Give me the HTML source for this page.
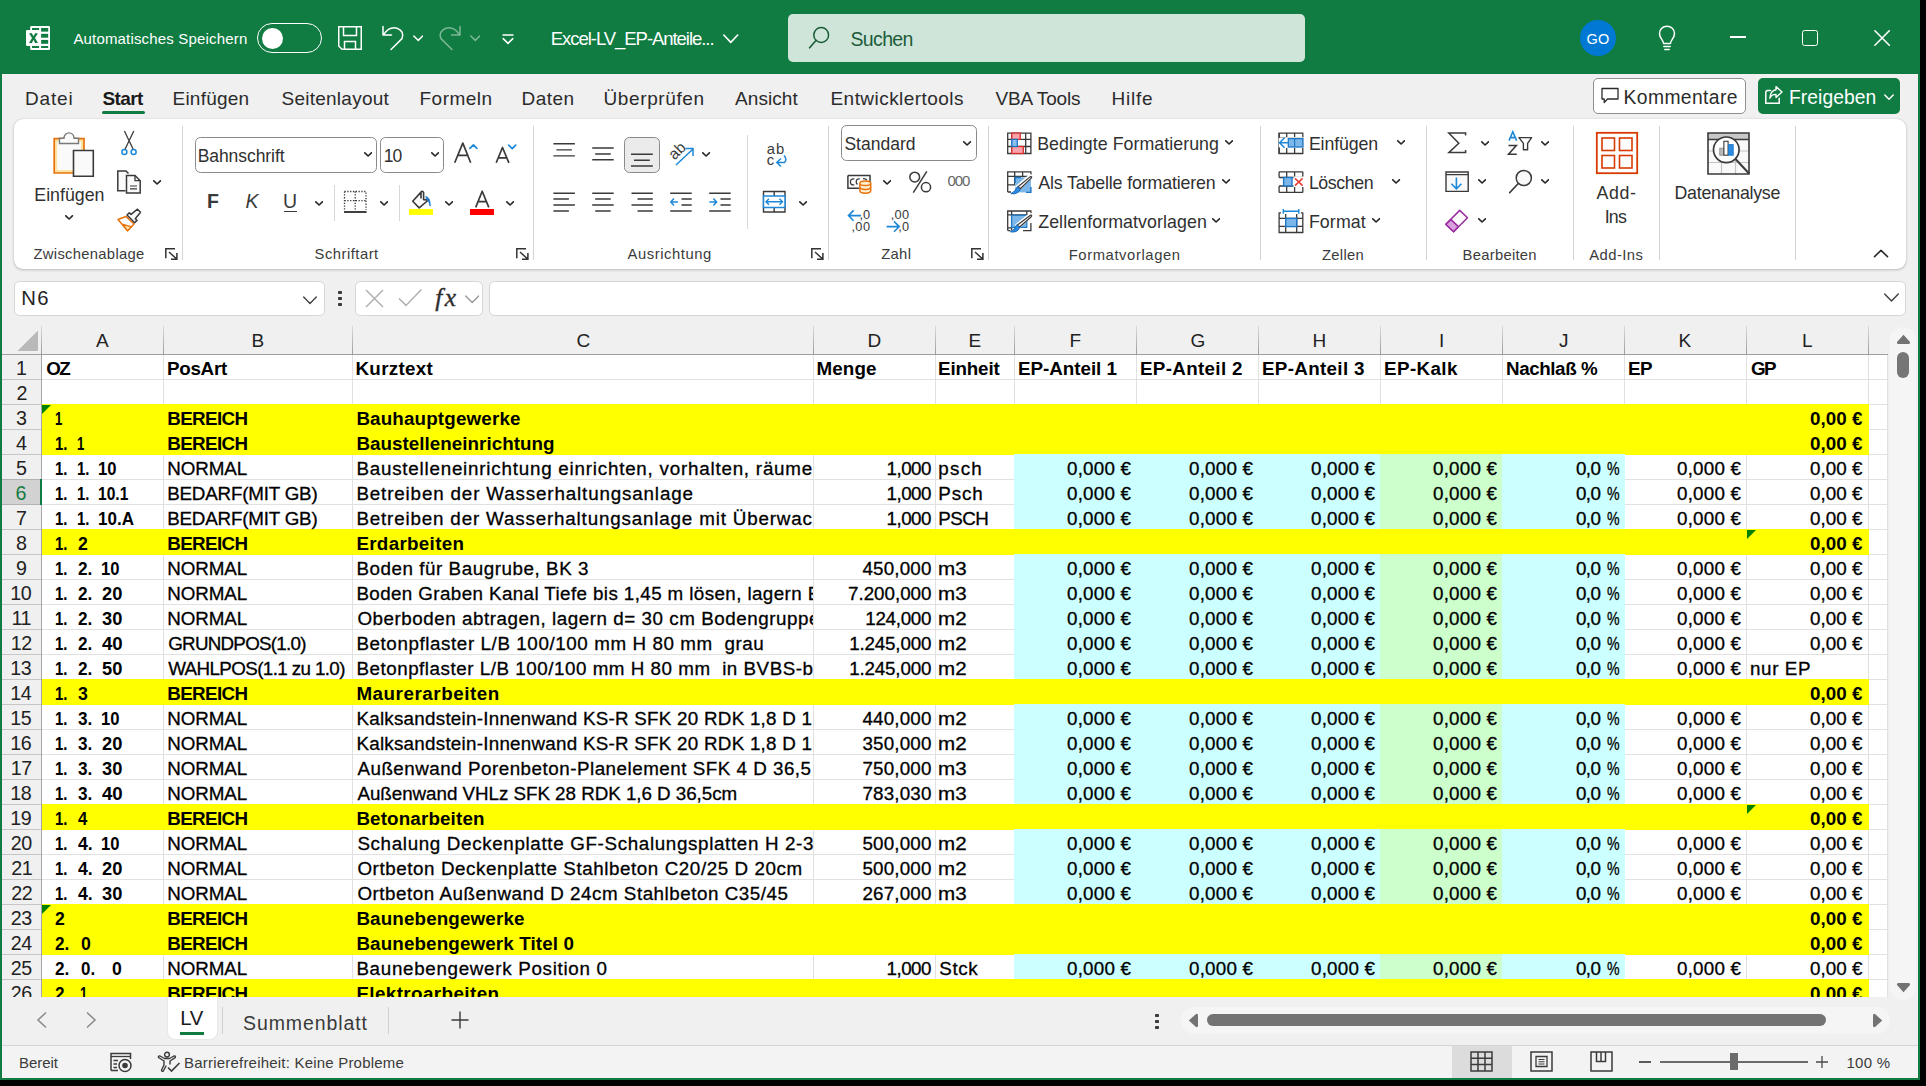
<!DOCTYPE html>
<html><head><meta charset="utf-8"><title>Excel</title>
<style>
html,body{margin:0;padding:0;}
body{width:1926px;height:1086px;overflow:hidden;background:#000;position:relative;font-family:'Liberation Sans', sans-serif;}
div,span,svg{position:absolute;box-sizing:border-box;}
.t{white-space:pre;}

</style></head><body>
<div style="left:0px;top:0px;width:1920px;height:1080px;background:#107c41;"></div>
<div style="left:2px;top:74px;width:1916px;height:1004px;background:#f0f0f0;"></div>
<svg style="left:26px;top:26px" width="24" height="24" viewBox="0 0 24 24">
<rect x="4.2" y="0" width="19.8" height="24" rx="1.2" fill="#fff"/><rect x="0" y="4" width="15" height="16" rx="1.2" fill="#fff"/>
<g fill="#107c41"><rect x="15.1" y="2" width="7.1" height="3.6"/><rect x="15.1" y="7.8" width="7.1" height="3.9"/><rect x="15.1" y="13.9" width="7.1" height="3.9"/><rect x="15.1" y="20" width="7.1" height="2"/>
<rect x="6" y="2" width="7.1" height="2"/><rect x="6" y="20" width="7.1" height="2"/>
<path d="M3 7.2 H5.9 L7.5 10.3 L9.1 7.2 H11.9 L9 12 L12 16.9 H9.1 L7.5 13.8 L5.9 16.9 H3 L6 12 Z"/></g></svg>
<span class="t" style="font-size:15px;letter-spacing:0.171px;line-height:17px;color:#fff;top:30px;left:73.40px;">Automatisches Speichern</span>
<div style="left:257px;top:23px;width:65px;height:30px;border:1.3px solid #fff;border-radius:15px"></div>
<div style="left:261.5px;top:27.5px;width:21px;height:21px;background:#fff;border-radius:50%"></div>
<svg style="left:338px;top:26px" width="24" height="24" viewBox="0 0 24 24"><path d="M0.75 0.75 H23.25 V23.25 H4 L0.75 20 Z M5.5 0.75 V9.5 H18.5 V0.75 M6.5 23.25 V15.5 H17.5 V23.25" fill="none" stroke="#fff" stroke-width="1.5" stroke-linejoin="miter"/></svg>
<svg style="left:381px;top:25px" width="24" height="26" viewBox="0 0 24 26"><path d="M2 1.5 V10 H10.5 M2.6 9.6 C6 4.5 11 1.8 16 3.2 C20.5 4.6 23.2 9 21 13.6 L10 24.5" fill="none" stroke="#fff" stroke-width="1.5" stroke-linecap="round" stroke-linejoin="round"/></svg>
<svg style="left:412.5px;top:35px;opacity:1" width="10.5" height="7" viewBox="0 0 10.5 7"><path d="M0.8 1 L5.25 5.4 L9.7 1" fill="none" stroke="#fff" stroke-width="1.5" stroke-linecap="round" stroke-linejoin="round"/></svg>
<svg style="left:438px;top:25px;opacity:0.45" width="24" height="26" viewBox="0 0 24 26"><path d="M22 1.5 V10 H13.5 M21.4 9.6 C18 4.5 13 1.8 8 3.2 C3.5 4.6 0.8 9 3 13.6 L14 24.5" fill="none" stroke="#fff" stroke-width="1.5" stroke-linecap="round" stroke-linejoin="round"/></svg>
<svg style="left:469.5px;top:35px;opacity:0.45" width="10.5" height="7" viewBox="0 0 10.5 7"><path d="M0.8 1 L5.25 5.4 L9.7 1" fill="none" stroke="#fff" stroke-width="1.5" stroke-linecap="round" stroke-linejoin="round"/></svg>
<svg style="left:501.5px;top:33.5px" width="12" height="11" viewBox="0 0 12 11"><path d="M0.5 1 H11.5" stroke="#fff" stroke-width="1.5"/><path d="M1.2 4.6 L6 9.4 L10.8 4.6" fill="none" stroke="#fff" stroke-width="1.5" stroke-linecap="round" stroke-linejoin="round"/></svg>
<span class="t" style="font-size:18.5px;letter-spacing:-1.049px;line-height:21px;color:#fff;top:28px;left:550.80px;">Excel-LV_EP-Anteile...</span>
<svg style="left:723px;top:34.2px;opacity:1" width="15.5" height="10" viewBox="0 0 15.5 10"><path d="M0.8 1 L7.75 8.4 L14.7 1" fill="none" stroke="#fff" stroke-width="1.6" stroke-linecap="round" stroke-linejoin="round"/></svg>
<div style="left:788px;top:14px;width:517px;height:48px;background:#cfe5d9;border-radius:5px"></div>
<svg style="left:808px;top:26px" width="24" height="24" viewBox="0 0 24 24"><circle cx="13.2" cy="9" r="7.4" fill="none" stroke="#185c37" stroke-width="1.5"/><path d="M8 14.4 L1.6 21.8" stroke="#185c37" stroke-width="1.6" stroke-linecap="round"/></svg>
<span class="t" style="font-size:19.5px;letter-spacing:-0.658px;line-height:22px;color:#1d5c3a;top:28px;left:850.50px;">Suchen</span>
<div style="left:1579.5px;top:20px;width:36px;height:36px;background:#0078d4;border-radius:50%"></div>
<span class="t" style="font-size:14.5px;letter-spacing:0.121px;line-height:16px;color:#fff;top:31px;left:1586.60px;">GO</span>
<svg style="left:1658px;top:25px" width="18" height="26" viewBox="0 0 18 26"><path d="M5.5 18.5 C5.5 15 1.5 13.5 1.5 8.5 C1.5 4.4 4.8 1.2 9 1.2 C13.2 1.2 16.5 4.4 16.5 8.5 C16.5 13.5 12.5 15 12.5 18.5 Z M5.8 21.5 H12.2 M6.8 24.5 H11.2" fill="none" stroke="#fff" stroke-width="1.5" stroke-linecap="round" stroke-linejoin="round"/></svg>
<div style="left:1730px;top:36.2px;width:16px;height:1.5px;background:#fff;"></div>
<div style="left:1802px;top:30px;width:16px;height:16px;border:1.8px solid #fff;border-radius:2.5px"></div>
<svg style="left:1873px;top:29px" width="18" height="18" viewBox="0 0 18 18"><path d="M1.9 1.8 L16.3 16.2 M16.3 1.8 L1.9 16.2" stroke="#fff" stroke-width="1.6" stroke-linecap="round"/></svg>
<span class="t" style="font-size:19px;letter-spacing:0.842px;line-height:21px;color:#2b2b2b;top:88px;left:25.00px;-webkit-text-stroke:0;">Datei</span>
<span class="t" style="font-size:19px;font-weight:700;letter-spacing:-0.615px;line-height:21px;color:#1a1a1a;top:88px;left:102.50px;">Start</span>
<span class="t" style="font-size:19px;letter-spacing:0.223px;line-height:21px;color:#2b2b2b;top:88px;left:172.50px;-webkit-text-stroke:0;">Einfügen</span>
<span class="t" style="font-size:19px;letter-spacing:0.246px;line-height:21px;color:#2b2b2b;top:88px;left:281.50px;-webkit-text-stroke:0;">Seitenlayout</span>
<span class="t" style="font-size:19px;letter-spacing:0.481px;line-height:21px;color:#2b2b2b;top:88px;left:419.50px;-webkit-text-stroke:0;">Formeln</span>
<span class="t" style="font-size:19px;letter-spacing:0.467px;line-height:21px;color:#2b2b2b;top:88px;left:521.50px;-webkit-text-stroke:0;">Daten</span>
<span class="t" style="font-size:19px;letter-spacing:0.612px;line-height:21px;color:#2b2b2b;top:88px;left:603.50px;-webkit-text-stroke:0;">Überprüfen</span>
<span class="t" style="font-size:19px;letter-spacing:0.079px;line-height:21px;color:#2b2b2b;top:88px;left:735.00px;-webkit-text-stroke:0;">Ansicht</span>
<span class="t" style="font-size:19px;letter-spacing:0.449px;line-height:21px;color:#2b2b2b;top:88px;left:830.50px;-webkit-text-stroke:0;">Entwicklertools</span>
<span class="t" style="font-size:19px;letter-spacing:-0.144px;line-height:21px;color:#2b2b2b;top:88px;left:995.50px;-webkit-text-stroke:0;">VBA Tools</span>
<span class="t" style="font-size:19px;letter-spacing:0.764px;line-height:21px;color:#2b2b2b;top:88px;left:1111.50px;-webkit-text-stroke:0;">Hilfe</span>
<div style="left:102px;top:110.5px;width:43px;height:3.2px;background:#107c41;border-radius:2px"></div>
<div style="left:1593px;top:78px;width:153px;height:36px;background:#fff;border:1px solid #8f8f8f;border-radius:5px"></div>
<svg style="left:1601px;top:87px" width="18" height="18" viewBox="0 0 18 18"><path d="M1 1.5 H17 V12 H6.5 L3.2 15.5 V12 H1 Z" fill="none" stroke="#2b2b2b" stroke-width="1.3" stroke-linejoin="round"/></svg>
<span class="t" style="font-size:19.3px;letter-spacing:0.383px;line-height:21px;color:#2b2b2b;top:87px;left:1623.60px;">Kommentare</span>
<div style="left:1758px;top:78px;width:142px;height:36px;background:#107c41;border-radius:5px"></div>
<svg style="left:1764px;top:85px" width="20" height="20" viewBox="0 0 20 20"><path d="M6.5 5.5 H3.8 Q1.8 5.5 1.8 7.5 V18.2 H15.2 V13.2" fill="none" stroke="#fff" stroke-width="1.5" stroke-linecap="round"/><path d="M12 1.6 L18 7 L12 12.4 V9.4 C9 9.2 7.2 10.6 5.8 13.2 C6.2 8.4 8.4 5.2 12 4.7 Z" fill="none" stroke="#fff" stroke-width="1.4" stroke-linejoin="round"/></svg>
<span class="t" style="font-size:19.3px;letter-spacing:0.050px;line-height:21px;color:#fff;top:87px;left:1789.00px;">Freigeben</span>
<svg style="left:1884px;top:94px;opacity:1" width="10" height="6.8" viewBox="0 0 10 6.8"><path d="M0.8 1 L5.0 5.2 L9.2 1" fill="none" stroke="#fff" stroke-width="1.5" stroke-linecap="round" stroke-linejoin="round"/></svg>
<div style="left:14px;top:119px;width:1892px;height:149.5px;background:#fff;border-radius:9px;box-shadow:0 1px 3px rgba(0,0,0,0.22),0 0 1px rgba(0,0,0,0.18)"></div>
<div style="left:182px;top:126px;width:1px;height:134px;background:#d4d4d4;"></div>
<div style="left:533px;top:126px;width:1px;height:134px;background:#d4d4d4;"></div>
<div style="left:828px;top:126px;width:1px;height:134px;background:#d4d4d4;"></div>
<div style="left:988px;top:126px;width:1px;height:134px;background:#d4d4d4;"></div>
<div style="left:1260px;top:126px;width:1px;height:134px;background:#d4d4d4;"></div>
<div style="left:1426px;top:126px;width:1px;height:134px;background:#d4d4d4;"></div>
<div style="left:1573px;top:126px;width:1px;height:134px;background:#d4d4d4;"></div>
<div style="left:1659px;top:126px;width:1px;height:134px;background:#d4d4d4;"></div>
<div style="left:1795px;top:126px;width:1px;height:134px;background:#d4d4d4;"></div>
<svg style="left:52px;top:131px;" width="44" height="47" viewBox="0 0 44 47">
<path d="M2.2 7.7 H32 V42 H2.2 Z" fill="#fbe3a6" stroke="#e8730c" stroke-width="1.7"/>
<path d="M5.2 10.5 H29 V39 H5.2 Z" fill="#fafafa"/>
<path d="M7.5 12.5 V7.3 H12 C12 0 22 0 22 7.3 H26.5 V12.5 Z" fill="#fafafa" stroke="#7a7a7a" stroke-width="1.4"/>
<path d="M21.5 19.5 H41.3 V45.3 H21.5 Z" fill="#fafafa" stroke="#3a3a3a" stroke-width="1.6"/></svg>
<span class="t" style="font-size:17.8px;letter-spacing:-0.001px;line-height:20px;color:#303030;top:185px;left:34.30px;">Einfügen</span>
<svg style="left:65px;top:214.6px" width="8.7" height="5.5" viewBox="0 0 8.7 5.5"><path d="M0.8 0.8 L4.1 3.96 L7.3999999999999995 0.8" fill="none" stroke="#262626" stroke-width="1.6" stroke-linecap="round" stroke-linejoin="round"/></svg>
<svg style="left:120px;top:130px;" width="18" height="26" viewBox="0 0 18 26"><path d="M4.4 1 L13.3 19.5 M13.8 1 L4.9 19.5" stroke="#3a3a3a" stroke-width="1.3" fill="none"/>
<circle cx="4.4" cy="22.1" r="2.5" fill="none" stroke="#1e88d8" stroke-width="1.5"/><circle cx="13.6" cy="22.1" r="2.5" fill="none" stroke="#1e88d8" stroke-width="1.5"/></svg>
<svg style="left:116px;top:169px;" width="26" height="26" viewBox="0 0 26 26"><path d="M9.5 21.7 H1.8 V2 H10 L12.5 4.5" fill="#fafafa" stroke="#3a3a3a" stroke-width="1.5"/>
<path d="M10.5 6.5 H19 L24.2 11.7 V24 H10.5 Z" fill="#fafafa" stroke="#3a3a3a" stroke-width="1.5"/><path d="M19 6.5 V11.7 H24.2" fill="none" stroke="#3a3a3a" stroke-width="1.3"/>
<path d="M14 17 H21 M14 19.8 H21" stroke="#3a3a3a" stroke-width="1.2"/></svg>
<svg style="left:153px;top:180px" width="8.7" height="5.5" viewBox="0 0 8.7 5.5"><path d="M0.8 0.8 L4.1 3.96 L7.3999999999999995 0.8" fill="none" stroke="#262626" stroke-width="1.6" stroke-linecap="round" stroke-linejoin="round"/></svg>
<svg style="left:116px;top:208px;" width="27" height="25" viewBox="0 0 27 25"><path d="M2 11.5 L10 8.5 L18 16 L11.5 22.8 Z" fill="#fafafa" stroke="#e8730c" stroke-width="1.5" stroke-linejoin="round"/>
<path d="M7 16.3 L15.5 18.8 L11.5 22.8 Z" fill="#fbe3a6" stroke="#e8730c" stroke-width="1.3" stroke-linejoin="round"/>
<path d="M11 7 L13.3 4.7 L15 6.4 L21.5 1.2 L24.5 4.2 L19.3 10.7 L21 12.4 L18.7 14.7 Z" fill="#fafafa" stroke="#3a3a3a" stroke-width="1.5" stroke-linejoin="round"/></svg>
<span class="t" style="font-size:14.8px;letter-spacing:0.292px;line-height:16px;color:#3b3b3b;top:246px;left:33.50px;">Zwischenablage</span>
<svg style="left:165px;top:248px;" width="13" height="12" viewBox="0 0 13 12"><path d="M0.8 10.3 V0.8 H10 M4 4 L11.4 10.8 M11.9 5 V11.2 H6" fill="none" stroke="#333" stroke-width="1.5"/></svg>
<div style="left:195px;top:137px;width:182px;height:36px;background:#fff;border:1px solid #8a8a8a;border-radius:5.5px"></div>
<div style="left:380px;top:137px;width:64px;height:36px;background:#fff;border:1px solid #8a8a8a;border-radius:5.5px"></div>
<span class="t" style="font-size:17.5px;letter-spacing:-0.068px;line-height:20px;color:#303030;top:146px;left:197.70px;">Bahnschrift</span>
<svg style="left:363.6px;top:152.3px" width="8.7" height="5.5" viewBox="0 0 8.7 5.5"><path d="M0.8 0.8 L4.1 3.96 L7.3999999999999995 0.8" fill="none" stroke="#262626" stroke-width="1.6" stroke-linecap="round" stroke-linejoin="round"/></svg>
<span class="t" style="font-size:17.5px;letter-spacing:-1.033px;line-height:20px;color:#303030;top:146px;left:383.70px;">10</span>
<svg style="left:430.6px;top:152.3px" width="8.7" height="5.5" viewBox="0 0 8.7 5.5"><path d="M0.8 0.8 L4.1 3.96 L7.3999999999999995 0.8" fill="none" stroke="#262626" stroke-width="1.6" stroke-linecap="round" stroke-linejoin="round"/></svg>
<svg style="left:452px;top:140px;" width="28" height="25" viewBox="0 0 28 25"><path d="M2.7 22.8 L10.8 3.1 L18.7 22.8 M5.9 15.4 H15.6" fill="none" stroke="#3a3a3a" stroke-width="1.7" stroke-linejoin="round"/><path d="M17.9 8.3 L21.4 4.8 L24.9 8.3" fill="none" stroke="#1e88d8" stroke-width="1.7" stroke-linecap="round" stroke-linejoin="round"/></svg>
<svg style="left:494px;top:140px;" width="24" height="25" viewBox="0 0 24 25"><path d="M2.2 22.8 L8.5 7.5 L14.9 22.8 M4.8 17.8 H12.3" fill="none" stroke="#3a3a3a" stroke-width="1.7" stroke-linejoin="round"/><path d="M14.7 5.1 L18.2 8.6 L21.7 5.1" fill="none" stroke="#1e88d8" stroke-width="1.7" stroke-linecap="round" stroke-linejoin="round"/></svg>
<span class="t" style="font-size:19.5px;font-weight:700;line-height:22px;color:#3a3a3a;top:190px;left:207.00px;">F</span>
<span class="t" style="font-size:19.5px;font-style:italic;line-height:22px;color:#3a3a3a;top:190px;left:245.40px;">K</span>
<span class="t" style="font-size:19.5px;line-height:22px;color:#3a3a3a;top:190px;left:283.10px;">U</span>
<div style="left:283.5px;top:210.6px;width:13.5px;height:1.3px;background:#3a3a3a;"></div>
<svg style="left:314.6px;top:200.6px" width="8.7" height="5.5" viewBox="0 0 8.7 5.5"><path d="M0.8 0.8 L4.1 3.96 L7.3999999999999995 0.8" fill="none" stroke="#262626" stroke-width="1.6" stroke-linecap="round" stroke-linejoin="round"/></svg>
<div style="left:334px;top:185px;width:1px;height:36px;background:#d8d8d8;"></div>
<svg style="left:343px;top:190px;" width="25" height="24" viewBox="0 0 25 24"><path d="M1.5 1.5 H23 V20 M1.5 1.5 V20 M12.2 1.5 V20 M1.5 10.7 H23" fill="none" stroke="#3a3a3a" stroke-width="1.3" stroke-dasharray="1.3 1.5"/>
<path d="M1 22 H23.6" stroke="#2b2b2b" stroke-width="1.8"/></svg>
<svg style="left:379.6px;top:200.6px" width="8.7" height="5.5" viewBox="0 0 8.7 5.5"><path d="M0.8 0.8 L4.1 3.96 L7.3999999999999995 0.8" fill="none" stroke="#262626" stroke-width="1.6" stroke-linecap="round" stroke-linejoin="round"/></svg>
<div style="left:399px;top:185px;width:1px;height:36px;background:#d8d8d8;"></div>
<svg style="left:408px;top:189px;" width="27" height="27" viewBox="0 0 27 27"><path d="M13 3.1 L4.7 12.3 L11.2 18.9 L20.4 11 L15.6 10.6 L15.6 3.6 Q14.3 1.2 13 3.1 L13 9.5" fill="#fafafa" stroke="#3a3a3a" stroke-width="1.6" stroke-linejoin="round"/>
<path d="M17.8 7.5 Q22.6 8.5 22.2 17.1 Q21.2 12 18.4 9.8 Z" fill="#1e78c8" stroke="#1e78c8" stroke-width="0.8"/>
<rect x="1" y="20" width="24" height="5.9" fill="#ffff00"/></svg>
<svg style="left:444.6px;top:200.6px" width="8.7" height="5.5" viewBox="0 0 8.7 5.5"><path d="M0.8 0.8 L4.1 3.96 L7.3999999999999995 0.8" fill="none" stroke="#262626" stroke-width="1.6" stroke-linecap="round" stroke-linejoin="round"/></svg>
<svg style="left:473px;top:189px;" width="18" height="20" viewBox="0 0 18 20"><path d="M2.7 18.4 L9.2 2.2 L15.8 18.4 M5.2 12.7 H13.2" fill="none" stroke="#3a3a3a" stroke-width="1.7" stroke-linejoin="round"/></svg>
<div style="left:470px;top:209px;width:24px;height:5.9px;background:#ff0000;"></div>
<svg style="left:505.8px;top:200.6px" width="8.7" height="5.5" viewBox="0 0 8.7 5.5"><path d="M0.8 0.8 L4.1 3.96 L7.3999999999999995 0.8" fill="none" stroke="#262626" stroke-width="1.6" stroke-linecap="round" stroke-linejoin="round"/></svg>
<span class="t" style="font-size:14.8px;letter-spacing:0.490px;line-height:16px;color:#3b3b3b;top:246px;left:314.60px;">Schriftart</span>
<svg style="left:516px;top:248px;" width="13" height="12" viewBox="0 0 13 12"><path d="M0.8 10.3 V0.8 H10 M4 4 L11.4 10.8 M11.9 5 V11.2 H6" fill="none" stroke="#333" stroke-width="1.5"/></svg>
<svg style="left:553px;top:140px;" width="24" height="24" viewBox="0 0 24 24"><path d="M0.4 3.7 H21.9 M3.4 9.9 H18.9 M0.4 15.9 H21.9" stroke="#3a3a3a" stroke-width="1.4" fill="none"/></svg>
<svg style="left:592px;top:140px;" width="24" height="24" viewBox="0 0 24 24"><path d="M0.2 8 H21.7 M3.2 14 H18.7 M0.2 19.8 H21.7" stroke="#3a3a3a" stroke-width="1.4" fill="none"/></svg>
<div style="left:624px;top:137px;width:36px;height:36px;background:#ebebeb;border:1px solid #8a8a8a;border-radius:5.5px"></div>
<svg style="left:631px;top:150px;" width="24" height="24" viewBox="0 0 24 24"><path d="M0 4.2 H21.8 M3 10.2 H18.8 M0 16 H21.8" stroke="#3a3a3a" stroke-width="1.4" fill="none"/></svg>
<svg style="left:668px;top:142px;" width="27" height="26" viewBox="0 0 27 26"><path d="M8 23 L24.5 7.5 M17.5 6.6 L25 6.6 L25 14" fill="none" stroke="#1e88d8" stroke-width="1.5"/></svg>
<span class="t" style="left:666px;top:143px;font-size:15.5px;line-height:15px;color:#3a3a3a;transform:rotate(-45deg);transform-origin:left bottom;left:675.5px;top:146.5px">ab</span>
<svg style="left:702px;top:152.3px" width="8.7" height="5.5" viewBox="0 0 8.7 5.5"><path d="M0.8 0.8 L4.1 3.96 L7.3999999999999995 0.8" fill="none" stroke="#262626" stroke-width="1.6" stroke-linecap="round" stroke-linejoin="round"/></svg>
<div style="left:747px;top:135px;width:1px;height:94px;background:#d8d8d8;"></div>
<span class="t" style="font-size:14.8px;letter-spacing:0.971px;line-height:16px;color:#3a3a3a;top:141px;left:766.80px;">ab</span>
<span class="t" style="font-size:14.8px;line-height:16px;color:#3a3a3a;top:152px;left:766.80px;">c</span>
<svg style="left:775px;top:155px;" width="13" height="13" viewBox="0 0 13 13"><path d="M9 0.5 Q12.5 4.5 9.5 7.5 L2 7.5 M6 3.5 L1.8 7.5 L6 11.5" fill="none" stroke="#1e88d8" stroke-width="1.5"/></svg>
<svg style="left:553px;top:190px;" width="24" height="24" viewBox="0 0 24 24"><path d="M0.4 3.3 H21.9 M0.4 9 H15.9 M0.4 15 H21.9 M0.4 21 H15.9" stroke="#3a3a3a" stroke-width="1.4" fill="none"/></svg>
<svg style="left:592px;top:190px;" width="24" height="24" viewBox="0 0 24 24"><path d="M0.2 3.3 H21.7 M3.2 9 H18.7 M0.2 15 H21.7 M3.2 21 H18.7" stroke="#3a3a3a" stroke-width="1.4" fill="none"/></svg>
<svg style="left:631px;top:190px;" width="24" height="24" viewBox="0 0 24 24"><path d="M0.5 3.3 H21.8 M6.5 9 H21.8 M0.5 15 H21.8 M6.5 21 H21.8" stroke="#3a3a3a" stroke-width="1.4" fill="none"/></svg>
<svg style="left:670px;top:190px;" width="23" height="24" viewBox="0 0 23 24"><path d="M0.2 3.3 H21.7 M11.5 9 H21.7 M11.5 15 H21.7 M0.2 21 H21.7" stroke="#3a3a3a" stroke-width="1.4" fill="none"/><path d="M8 12 H0.8 M4 8.6 L0.8 12 L4 15.4" fill="none" stroke="#1e88d8" stroke-width="1.5"/></svg>
<svg style="left:709px;top:190px;" width="23" height="24" viewBox="0 0 23 24"><path d="M0.2 3.3 H21.7 M11.5 9 H21.7 M11.5 15 H21.7 M0.2 21 H21.7" stroke="#3a3a3a" stroke-width="1.4" fill="none"/><path d="M0.4 12 H7.6 M4.4 8.6 L7.6 12 L4.4 15.4" fill="none" stroke="#1e88d8" stroke-width="1.5"/></svg>
<svg style="left:762px;top:190px;" width="25" height="24" viewBox="0 0 25 24"><path d="M1.5 1.5 H23 V22 H1.5 Z M12.2 1.5 V6 M12.2 17.5 V22" fill="none" stroke="#3a3a3a" stroke-width="1.4"/>
<rect x="1.5" y="6" width="21.5" height="11.5" fill="#fff" stroke="#1e88d8" stroke-width="1.5"/>
<path d="M4 11.8 H20.5 M7 8.8 L4 11.8 L7 14.8 M17.5 8.8 L20.5 11.8 L17.5 14.8" fill="none" stroke="#1e88d8" stroke-width="1.4"/></svg>
<svg style="left:798.8px;top:200.6px" width="8.7" height="5.5" viewBox="0 0 8.7 5.5"><path d="M0.8 0.8 L4.1 3.96 L7.3999999999999995 0.8" fill="none" stroke="#262626" stroke-width="1.6" stroke-linecap="round" stroke-linejoin="round"/></svg>
<span class="t" style="font-size:14.8px;letter-spacing:0.549px;line-height:16px;color:#3b3b3b;top:246px;left:627.60px;">Ausrichtung</span>
<svg style="left:811px;top:248px;" width="13" height="12" viewBox="0 0 13 12"><path d="M0.8 10.3 V0.8 H10 M4 4 L11.4 10.8 M11.9 5 V11.2 H6" fill="none" stroke="#333" stroke-width="1.5"/></svg>
<div style="left:841px;top:125px;width:136px;height:36px;background:#fff;border:1px solid #8a8a8a;border-radius:5.5px"></div>
<span class="t" style="font-size:17.5px;letter-spacing:0.015px;line-height:20px;color:#303030;top:134px;left:844.40px;">Standard</span>
<svg style="left:963.3px;top:140.5px" width="8.7" height="5.5" viewBox="0 0 8.7 5.5"><path d="M0.8 0.8 L4.1 3.96 L7.3999999999999995 0.8" fill="none" stroke="#262626" stroke-width="1.6" stroke-linecap="round" stroke-linejoin="round"/></svg>
<svg style="left:846px;top:173px;" width="27" height="22" viewBox="0 0 27 22"><path d="M1.9 2.4 H24 V9 M1.9 2.4 V15.3 H13" fill="none" stroke="#3a3a3a" stroke-width="1.5"/>
<path d="M8.3 6 Q4.4 5.4 4.4 8.9 Q4.4 12.4 8.3 11.8 M13.6 6 Q10.2 5.4 10.2 8.9 Q10.2 10.5 11.5 11.4 M17 5.6 Q20.4 5.6 20.6 7.4" fill="none" stroke="#3a3a3a" stroke-width="1.3"/>
<path d="M13.9 10.3 V17.8 Q13.9 20.2 19.3 20.2 Q24.7 20.2 24.7 17.8 V10.3" fill="#fdf0d0" stroke="#e8730c" stroke-width="1.5"/>
<ellipse cx="19.3" cy="10.3" rx="5.4" ry="2.3" fill="#fdf0d0" stroke="#e8730c" stroke-width="1.5"/>
<path d="M13.9 14 Q13.9 16.4 19.3 16.4 Q24.7 16.4 24.7 14" fill="none" stroke="#e8730c" stroke-width="1.5"/></svg>
<svg style="left:882.8px;top:179.8px" width="8.7" height="5.5" viewBox="0 0 8.7 5.5"><path d="M0.8 0.8 L4.1 3.96 L7.3999999999999995 0.8" fill="none" stroke="#262626" stroke-width="1.6" stroke-linecap="round" stroke-linejoin="round"/></svg>
<svg style="left:907px;top:170px;" width="26" height="24" viewBox="0 0 26 24"><circle cx="7.7" cy="7.1" r="4.9" fill="none" stroke="#3a3a3a" stroke-width="1.5"/><circle cx="19" cy="17.2" r="4.6" fill="none" stroke="#3a3a3a" stroke-width="1.5"/><path d="M19.8 1.4 L6.3 22.6" stroke="#3a3a3a" stroke-width="1.5"/></svg>
<span class="t" style="font-size:15px;letter-spacing:-1.042px;line-height:17px;color:#666;top:172px;left:947.40px;">000</span>
<span class="t" style="font-size:12.8px;letter-spacing:-0.055px;line-height:15px;color:#3a3a3a;top:207px;left:859.40px;">,0</span>
<span class="t" style="font-size:12.8px;letter-spacing:0.414px;line-height:15px;color:#3a3a3a;top:219px;left:851.40px;">,00</span>
<svg style="left:846.5px;top:209px;" width="16" height="13" viewBox="0 0 16 13"><path d="M14 6.6 H1.5 M6.6 1.4 L1.5 6.6 L6.6 11.8" fill="none" stroke="#1e88d8" stroke-width="1.6"/></svg>
<span class="t" style="font-size:12.8px;letter-spacing:0.264px;line-height:15px;color:#3a3a3a;top:207px;left:890.70px;">,00</span>
<span class="t" style="font-size:12.8px;letter-spacing:0.045px;line-height:15px;color:#3a3a3a;top:219px;left:898.30px;">,0</span>
<svg style="left:885.5px;top:219.5px;" width="16" height="13" viewBox="0 0 16 13"><path d="M0.6 6.6 H13 M8 1.4 L13.2 6.6 L8 11.8" fill="none" stroke="#1e88d8" stroke-width="1.6"/></svg>
<span class="t" style="font-size:14.8px;letter-spacing:0.334px;line-height:16px;color:#3b3b3b;top:246px;left:881.20px;">Zahl</span>
<svg style="left:971px;top:248px;" width="13" height="12" viewBox="0 0 13 12"><path d="M0.8 10.3 V0.8 H10 M4 4 L11.4 10.8 M11.9 5 V11.2 H6" fill="none" stroke="#333" stroke-width="1.5"/></svg>
<svg style="left:1007px;top:132px;" width="25" height="23" viewBox="0 0 25 23"><path d="M0.7 1.1 H23.9 V21.5 H0.7 Z M0.7 7.4 H23.9 M0.7 14.5 H23.9 M4.8 1.1 V21.5 M18.7 1.1 V21.5" fill="none" stroke="#3a3a3a" stroke-width="1.3"/>
<rect x="4.8" y="1.1" width="8.4" height="6.3" fill="#f9a3ab" stroke="#d92c2c" stroke-width="1.3"/><rect x="4.8" y="14.5" width="11.5" height="7" fill="#f9a3ab" stroke="#d92c2c" stroke-width="1.3"/>
<rect x="4.8" y="7.4" width="5.5" height="7.1" fill="#8cc0ee" stroke="#1e78c8" stroke-width="1.3"/></svg>
<span class="t" style="font-size:17.8px;letter-spacing:0.041px;line-height:20px;color:#303030;top:134px;left:1037.20px;">Bedingte Formatierung</span>
<svg style="left:1224.6px;top:140px" width="8.7" height="5.5" viewBox="0 0 8.7 5.5"><path d="M0.8 0.8 L4.1 3.96 L7.3999999999999995 0.8" fill="none" stroke="#262626" stroke-width="1.6" stroke-linecap="round" stroke-linejoin="round"/></svg>
<svg style="left:1007px;top:171px;" width="26" height="24" viewBox="0 0 26 24"><path d="M0.7 21 V0.8 H23.9 V6 M0.7 5.4 H23.9 M0.7 13.8 H8 M7.7 0.8 V13.8 M15.6 0.8 V6.5 M0.7 21 H4" fill="none" stroke="#3a3a3a" stroke-width="1.3"/>
<rect x="8.2" y="6.5" width="15.7" height="14.9" fill="#7db7ea"/><path d="M8.2 12 V6.5 H14 M19 21.4 H23.9 V16" fill="none" stroke="#1e78c8" stroke-width="1.4"/>
<path d="M25 5.2 L12.5 17.6 L10 15.4 L23.2 4.2 Z" fill="#fff" stroke="#fff" stroke-width="2.4"/>
<path d="M23.4 5.6 Q25.6 5.2 24 7.4 L13.2 17.8 L11 15.8 Z" fill="#fff" stroke="#3a3a3a" stroke-width="1.2" stroke-linejoin="round"/>
<path d="M10.3 15.6 L13.4 18.4 Q10.5 24 3.8 22.6 Q8.5 20.8 10.3 15.6 Z" fill="#2b8be0" stroke="#1565b8" stroke-width="0.9"/></svg>
<span class="t" style="font-size:17.8px;letter-spacing:-0.135px;line-height:20px;color:#303030;top:173px;left:1038.20px;">Als Tabelle formatieren</span>
<svg style="left:1222px;top:179.4px" width="8.7" height="5.5" viewBox="0 0 8.7 5.5"><path d="M0.8 0.8 L4.1 3.96 L7.3999999999999995 0.8" fill="none" stroke="#262626" stroke-width="1.6" stroke-linecap="round" stroke-linejoin="round"/></svg>
<svg style="left:1007px;top:210px;" width="26" height="24" viewBox="0 0 26 24"><path d="M0.7 20.6 V1 H23.9 V5 M0.7 4.8 H23.9 M4.6 1 V20.6 M19.8 1 V4.8 M0.7 17.8 H4.6 M0.7 20.6 H3.4 M16 20.6 H23.9 V13" fill="none" stroke="#3a3a3a" stroke-width="1.3"/>
<rect x="4.6" y="5.3" width="15.2" height="12.1" fill="#7db7ea" stroke="#1e78c8" stroke-width="1.2"/>
<path d="M25 5 L12 17 L9.6 14.8 L23.2 4 Z" fill="#fff" stroke="#fff" stroke-width="2.4"/>
<path d="M23.4 5.2 Q25.6 4.8 24 7 L12.6 17 L10.4 15 Z" fill="#fff" stroke="#3a3a3a" stroke-width="1.2" stroke-linejoin="round"/>
<path d="M9.8 14.8 L12.9 17.6 Q10 23.2 3.3 21.8 Q8 20 9.8 14.8 Z" fill="#2b8be0" stroke="#1565b8" stroke-width="0.9"/></svg>
<span class="t" style="font-size:17.8px;letter-spacing:0.087px;line-height:20px;color:#303030;top:212px;left:1038.20px;">Zellenformatvorlagen</span>
<svg style="left:1211.8px;top:218.4px" width="8.7" height="5.5" viewBox="0 0 8.7 5.5"><path d="M0.8 0.8 L4.1 3.96 L7.3999999999999995 0.8" fill="none" stroke="#262626" stroke-width="1.6" stroke-linecap="round" stroke-linejoin="round"/></svg>
<span class="t" style="font-size:14.8px;letter-spacing:0.593px;line-height:16px;color:#3b3b3b;top:247px;left:1068.70px;">Formatvorlagen</span>
<svg style="left:1278px;top:132px;" width="26" height="23" viewBox="0 0 26 23"><path d="M1.1 1.1 H24.8 V21.5 H1.1 Z M1.1 6 H24.8 M1.1 15.3 H24.8 M8.7 1.1 V21.5 M16.6 1.1 V21.5" fill="none" stroke="#3a3a3a" stroke-width="1.3"/>
<rect x="8" y="5.2" width="17.5" height="10.8" fill="#fff"/>
<rect x="10.3" y="6.6" width="14.5" height="8.4" fill="#7db7ea" stroke="#1e78c8" stroke-width="1.3"/><path d="M16.6 6.6 V15" stroke="#1e78c8" stroke-width="1.2"/>
<path d="M1 5.5 H8 V16 H1 Z" fill="#fff" stroke="none"/><path d="M1.1 1.1 V6 M1.1 15.3 V21.5" stroke="#3a3a3a" stroke-width="1.3"/>
<path d="M11 10.8 H1.6 M6.6 5.8 L1.6 10.8 L6.6 15.8" fill="none" stroke="#1e88d8" stroke-width="1.6"/></svg>
<span class="t" style="font-size:17.8px;letter-spacing:-0.130px;line-height:20px;color:#303030;top:134px;left:1308.90px;">Einfügen</span>
<svg style="left:1396.8px;top:140px" width="8.7" height="5.5" viewBox="0 0 8.7 5.5"><path d="M0.8 0.8 L4.1 3.96 L7.3999999999999995 0.8" fill="none" stroke="#262626" stroke-width="1.6" stroke-linecap="round" stroke-linejoin="round"/></svg>
<svg style="left:1278px;top:171px;" width="26" height="23" viewBox="0 0 26 23"><path d="M1.1 0.8 H24.8 M1.1 21.4 H24.8 M1.1 0.8 V6.5 M8.7 0.8 V6.5 M16.6 0.8 V6.5 M24.8 0.8 V6.5 M1.1 15 V21.4 M8.7 15 V21.4 M16.6 15 V21.4 M24.8 15 V21.4 M1.1 6.5 H24.8 M1.1 15 H24.8" fill="none" stroke="#3a3a3a" stroke-width="1.3"/>
<rect x="15.5" y="5.5" width="10.5" height="10.5" fill="#fff"/>
<rect x="5.6" y="6.5" width="8.4" height="8.4" fill="#7db7ea" stroke="#1e78c8" stroke-width="1.4"/>
<path d="M17 7.4 L24.6 14.6 M24.6 7.4 L17 14.6" stroke="#e8423a" stroke-width="1.6"/></svg>
<span class="t" style="font-size:17.8px;letter-spacing:-0.423px;line-height:20px;color:#303030;top:173px;left:1308.90px;">Löschen</span>
<svg style="left:1392px;top:179.4px" width="8.7" height="5.5" viewBox="0 0 8.7 5.5"><path d="M0.8 0.8 L4.1 3.96 L7.3999999999999995 0.8" fill="none" stroke="#262626" stroke-width="1.6" stroke-linecap="round" stroke-linejoin="round"/></svg>
<svg style="left:1278px;top:208px;" width="26" height="26" viewBox="0 0 26 26"><path d="M5.3 1 V5.7 M20.8 1 V5.7 M5.3 3.3 H20.8" fill="none" stroke="#1e88d8" stroke-width="1.4"/>
<path d="M1.1 4.5 V24.5 H24.8 V4.5 M1.1 10.4 H24.8 M1.1 18.4 H24.8 M7.7 6 V24.5 M18.7 6 V24.5 M1.1 4.9 H3 M22.9 4.9 H24.8" fill="none" stroke="#3a3a3a" stroke-width="1.3"/>
<rect x="7.7" y="10.4" width="11" height="8.2" fill="#7db7ea" stroke="#1e78c8" stroke-width="1.4"/></svg>
<span class="t" style="font-size:17.8px;letter-spacing:0.105px;line-height:20px;color:#303030;top:212px;left:1308.90px;">Format</span>
<svg style="left:1372.2px;top:218.4px" width="8.7" height="5.5" viewBox="0 0 8.7 5.5"><path d="M0.8 0.8 L4.1 3.96 L7.3999999999999995 0.8" fill="none" stroke="#262626" stroke-width="1.6" stroke-linecap="round" stroke-linejoin="round"/></svg>
<span class="t" style="font-size:14.8px;letter-spacing:0.286px;line-height:16px;color:#3b3b3b;top:247px;left:1322.00px;">Zellen</span>
<svg style="left:1447px;top:131px;" width="20" height="24" viewBox="0 0 20 24"><path d="M18.6 4.6 V2 H1.8 L11.8 12.2 L1.8 21.6 H18.6 V19" fill="none" stroke="#3a3a3a" stroke-width="1.5" stroke-linejoin="miter"/></svg>
<svg style="left:1480.6px;top:140.6px" width="8.7" height="5.5" viewBox="0 0 8.7 5.5"><path d="M0.8 0.8 L4.1 3.96 L7.3999999999999995 0.8" fill="none" stroke="#262626" stroke-width="1.6" stroke-linecap="round" stroke-linejoin="round"/></svg>
<svg style="left:1507px;top:130px;" width="27" height="26" viewBox="0 0 27 26"><path d="M2 10.6 L5.8 1.8 L9.6 10.6 M3.3 7.6 H8.3" fill="none" stroke="#1e88d8" stroke-width="1.6"/>
<path d="M1.5 15.5 H9.3 L1.5 24.3 H9.8" fill="none" stroke="#3a3a3a" stroke-width="1.6"/>
<path d="M12 7.6 H24.6 L20.6 13.4 V19.8 H16.4 V13.4 Z" fill="none" stroke="#3a3a3a" stroke-width="1.4" stroke-linejoin="round"/></svg>
<svg style="left:1540.8px;top:140.6px" width="8.7" height="5.5" viewBox="0 0 8.7 5.5"><path d="M0.8 0.8 L4.1 3.96 L7.3999999999999995 0.8" fill="none" stroke="#262626" stroke-width="1.6" stroke-linecap="round" stroke-linejoin="round"/></svg>
<svg style="left:1444px;top:170px;" width="26" height="23" viewBox="0 0 26 23"><path d="M2 2 H24.2 V21.4 H2 Z M2 4.6 H24.2" fill="#fafafa" stroke="#3a3a3a" stroke-width="1.4"/><path d="M12.4 7.4 V18.6 M7.4 13.8 L12.4 18.8 L17.4 13.8" fill="none" stroke="#1e88d8" stroke-width="1.6"/></svg>
<svg style="left:1477.8px;top:179.4px" width="8.7" height="5.5" viewBox="0 0 8.7 5.5"><path d="M0.8 0.8 L4.1 3.96 L7.3999999999999995 0.8" fill="none" stroke="#262626" stroke-width="1.6" stroke-linecap="round" stroke-linejoin="round"/></svg>
<svg style="left:1508px;top:169px;" width="26" height="26" viewBox="0 0 26 26"><circle cx="15.8" cy="9" r="7.6" fill="#fafafa" stroke="#3a3a3a" stroke-width="1.5"/><path d="M10.3 14.5 L1.7 23.6" stroke="#3a3a3a" stroke-width="1.6" stroke-linecap="round"/></svg>
<svg style="left:1540.8px;top:179.4px" width="8.7" height="5.5" viewBox="0 0 8.7 5.5"><path d="M0.8 0.8 L4.1 3.96 L7.3999999999999995 0.8" fill="none" stroke="#262626" stroke-width="1.6" stroke-linecap="round" stroke-linejoin="round"/></svg>
<svg style="left:1444px;top:209px;" width="26" height="25" viewBox="0 0 26 25"><path d="M15.7 1.4 L23.5 8.8 L9.6 22.8 L1.8 15.2 Z" fill="#fafafa" stroke="#9a2ba0" stroke-width="1.5" stroke-linejoin="round"/><path d="M7 10.6 L14.4 17.6 L9.6 22.8 L1.8 15.2 Z" fill="#d9a0de" stroke="#9a2ba0" stroke-width="1.5" stroke-linejoin="round"/></svg>
<svg style="left:1477.8px;top:218.4px" width="8.7" height="5.5" viewBox="0 0 8.7 5.5"><path d="M0.8 0.8 L4.1 3.96 L7.3999999999999995 0.8" fill="none" stroke="#262626" stroke-width="1.6" stroke-linecap="round" stroke-linejoin="round"/></svg>
<span class="t" style="font-size:14.8px;letter-spacing:0.262px;line-height:16px;color:#3b3b3b;top:247px;left:1462.60px;">Bearbeiten</span>
<svg style="left:1595px;top:131px;" width="44" height="44" viewBox="0 0 44 44"><rect x="1.8" y="1.8" width="40.4" height="40.4" fill="none" stroke="#d83b01" stroke-width="1.8"/>
<rect x="7" y="7" width="12.5" height="12.5" fill="none" stroke="#d83b01" stroke-width="1.6"/><rect x="24.5" y="7" width="12.5" height="12.5" fill="none" stroke="#d83b01" stroke-width="1.6"/>
<rect x="7" y="24.5" width="12.5" height="12.5" fill="none" stroke="#d83b01" stroke-width="1.6"/><rect x="24.5" y="24.5" width="12.5" height="12.5" fill="none" stroke="#d83b01" stroke-width="1.6"/></svg>
<span class="t" style="font-size:17.8px;letter-spacing:0.621px;line-height:20px;color:#303030;top:183px;left:1596.60px;">Add-</span>
<span class="t" style="font-size:17.8px;letter-spacing:-0.765px;line-height:20px;color:#303030;top:207px;left:1604.70px;">Ins</span>
<span class="t" style="font-size:14.8px;letter-spacing:0.434px;line-height:16px;color:#3b3b3b;top:247px;left:1589.30px;">Add-Ins</span>
<svg style="left:1706px;top:131px;" width="45" height="45" viewBox="0 0 45 45"><rect x="2" y="2" width="41" height="41" fill="#fafafa"/><rect x="2" y="2" width="41" height="6.5" fill="#c8c8c8"/>
<path d="M2 20 H43 M2 31.5 H43 M15.5 8.5 V43 M29.5 8.5 V43" fill="none" stroke="#c4c4c4" stroke-width="1.2"/>
<path d="M2 2 H43 V43 H2 Z M2 8.5 H43" fill="none" stroke="#3a3a3a" stroke-width="1.6"/>
<circle cx="20.3" cy="18.8" r="12.8" fill="#fff" stroke="#3a3a3a" stroke-width="1.7"/>
<path d="M29.5 28 L43 42.5" stroke="#3a3a3a" stroke-width="2"/>
<rect x="13.8" y="17.2" width="3.8" height="7" fill="#bdbdbd" stroke="#8a8a8a" stroke-width="0.9"/><rect x="17.9" y="10.3" width="4.2" height="13.9" fill="#fff" stroke="#3a3a3a" stroke-width="1.1"/><rect x="22.4" y="13.6" width="4.8" height="10.6" fill="#2b8be0" stroke="#1e78c8" stroke-width="0.9"/></svg>
<span class="t" style="font-size:17.8px;letter-spacing:-0.259px;line-height:20px;color:#303030;top:183px;left:1674.50px;">Datenanalyse</span>
<svg style="left:1872.5px;top:249px;" width="17" height="10" viewBox="0 0 17 10"><path d="M1.5 7.6 L8 1.4 L14.5 7.6" fill="none" stroke="#2b2b2b" stroke-width="1.6" stroke-linecap="round" stroke-linejoin="round"/></svg>
<div style="left:14px;top:281px;width:311px;height:35px;background:#fff;border:1px solid #d6d6d6;border-radius:5.5px;"></div>
<div style="left:355px;top:281px;width:128px;height:35px;background:#fff;border:1px solid #d6d6d6;border-radius:5.5px;"></div>
<div style="left:489px;top:281px;width:1417px;height:35px;background:#fff;border:1px solid #d6d6d6;border-radius:5.5px;"></div>
<span class="t" style="font-size:20.3px;letter-spacing:1.354px;line-height:22px;color:#242424;top:287px;left:21.20px;">N6</span>
<svg style="left:302.8px;top:296px" width="14" height="9.5" viewBox="0 0 14 9.5"><path d="M0.7 1 L7.0 7.5 L13.3 1" fill="none" stroke="#444" stroke-width="1.4" stroke-linecap="round" stroke-linejoin="round"/></svg>
<svg style="left:1884px;top:292.6px" width="15" height="10" viewBox="0 0 15 10"><path d="M0.7 1 L7.5 8 L14.3 1" fill="none" stroke="#444" stroke-width="1.5" stroke-linecap="round" stroke-linejoin="round"/></svg>
<svg style="left:465px;top:294.6px" width="14.4" height="9.6" viewBox="0 0 14.4 9.6"><path d="M0.7 1 L7.2 7.6 L13.700000000000001 1" fill="none" stroke="#9a9a9a" stroke-width="1.4" stroke-linecap="round" stroke-linejoin="round"/></svg>
<div style="left:338.3px;top:291px;width:3.4px;height:3.2px;background:#3a3a3a;border-radius:0.8px;"></div>
<div style="left:338.3px;top:297px;width:3.4px;height:3.2px;background:#3a3a3a;border-radius:0.8px;"></div>
<div style="left:338.3px;top:303px;width:3.4px;height:3.2px;background:#3a3a3a;border-radius:0.8px;"></div>
<svg style="left:365px;top:289px" width="20" height="20" viewBox="0 0 20 20"><path d="M1 1 L18 18 M18 1 L1 18" stroke="#b0b0b0" stroke-width="1.5" fill="none"/></svg>
<svg style="left:398px;top:288.4px" width="24" height="20" viewBox="0 0 24 20"><path d="M1 10.5 L8 17.4 L23.4 1.6" stroke="#b0b0b0" stroke-width="1.5" fill="none"/></svg>
<span class="t" style="font-size:25.5px;font-style:italic;font-family:'Liberation Serif', serif;letter-spacing:2.500px;line-height:29px;color:#2e2e2e;top:283px;left:435.20px;-webkit-text-stroke:0.35px #2e2e2e;">fx</span>
<div style="left:42px;top:355px;width:1846px;height:642px;background:#fff;"></div>
<span class="t" style="font-size:19px;line-height:21px;color:#222;top:330px;left:96.00px;">A</span>
<span class="t" style="font-size:19px;line-height:21px;color:#222;top:330px;left:251.50px;">B</span>
<span class="t" style="font-size:19px;line-height:21px;color:#222;top:330px;left:576.50px;">C</span>
<span class="t" style="font-size:19px;line-height:21px;color:#222;top:330px;left:867.50px;">D</span>
<span class="t" style="font-size:19px;line-height:21px;color:#222;top:330px;left:968.50px;">E</span>
<span class="t" style="font-size:19px;line-height:21px;color:#222;top:330px;left:1069.50px;">F</span>
<span class="t" style="font-size:19px;line-height:21px;color:#222;top:330px;left:1190.50px;">G</span>
<span class="t" style="font-size:19px;line-height:21px;color:#222;top:330px;left:1312.50px;">H</span>
<span class="t" style="font-size:19px;line-height:21px;color:#222;top:330px;left:1439.00px;">I</span>
<span class="t" style="font-size:19px;line-height:21px;color:#222;top:330px;left:1559.00px;">J</span>
<span class="t" style="font-size:19px;line-height:21px;color:#222;top:330px;left:1678.50px;">K</span>
<span class="t" style="font-size:19px;line-height:21px;color:#222;top:330px;left:1802.00px;">L</span>
<div style="left:163px;top:326px;width:1px;height:28px;background:linear-gradient(#dadada,#9c9c9c);"></div>
<div style="left:352px;top:326px;width:1px;height:28px;background:linear-gradient(#dadada,#9c9c9c);"></div>
<div style="left:813px;top:326px;width:1px;height:28px;background:linear-gradient(#dadada,#9c9c9c);"></div>
<div style="left:935px;top:326px;width:1px;height:28px;background:linear-gradient(#dadada,#9c9c9c);"></div>
<div style="left:1014px;top:326px;width:1px;height:28px;background:linear-gradient(#dadada,#9c9c9c);"></div>
<div style="left:1136px;top:326px;width:1px;height:28px;background:linear-gradient(#dadada,#9c9c9c);"></div>
<div style="left:1258px;top:326px;width:1px;height:28px;background:linear-gradient(#dadada,#9c9c9c);"></div>
<div style="left:1380px;top:326px;width:1px;height:28px;background:linear-gradient(#dadada,#9c9c9c);"></div>
<div style="left:1502px;top:326px;width:1px;height:28px;background:linear-gradient(#dadada,#9c9c9c);"></div>
<div style="left:1624px;top:326px;width:1px;height:28px;background:linear-gradient(#dadada,#9c9c9c);"></div>
<div style="left:1746px;top:326px;width:1px;height:28px;background:linear-gradient(#dadada,#9c9c9c);"></div>
<div style="left:1868px;top:326px;width:1px;height:28px;background:linear-gradient(#dadada,#9c9c9c);"></div>
<div style="left:41px;top:326px;width:1px;height:28px;background:linear-gradient(#dadada,#9c9c9c);"></div>
<div style="left:2px;top:354px;width:1886px;height:1px;background:#9e9e9e;"></div>
<svg style="left:17px;top:330px" width="22" height="22" viewBox="0 0 22 22"><path d="M21 0.5 L21 21 L0.5 21 Z" fill="#b9b9b9"/></svg>
<div style="left:42px;top:379px;width:1846px;height:1px;background:#e1e1e1;"></div>
<div style="left:42px;top:404px;width:1846px;height:1px;background:#e1e1e1;"></div>
<div style="left:42px;top:429px;width:1846px;height:1px;background:#e1e1e1;"></div>
<div style="left:42px;top:454px;width:1846px;height:1px;background:#e1e1e1;"></div>
<div style="left:42px;top:479px;width:1846px;height:1px;background:#e1e1e1;"></div>
<div style="left:42px;top:504px;width:1846px;height:1px;background:#e1e1e1;"></div>
<div style="left:42px;top:529px;width:1846px;height:1px;background:#e1e1e1;"></div>
<div style="left:42px;top:554px;width:1846px;height:1px;background:#e1e1e1;"></div>
<div style="left:42px;top:579px;width:1846px;height:1px;background:#e1e1e1;"></div>
<div style="left:42px;top:604px;width:1846px;height:1px;background:#e1e1e1;"></div>
<div style="left:42px;top:629px;width:1846px;height:1px;background:#e1e1e1;"></div>
<div style="left:42px;top:654px;width:1846px;height:1px;background:#e1e1e1;"></div>
<div style="left:42px;top:679px;width:1846px;height:1px;background:#e1e1e1;"></div>
<div style="left:42px;top:704px;width:1846px;height:1px;background:#e1e1e1;"></div>
<div style="left:42px;top:729px;width:1846px;height:1px;background:#e1e1e1;"></div>
<div style="left:42px;top:754px;width:1846px;height:1px;background:#e1e1e1;"></div>
<div style="left:42px;top:779px;width:1846px;height:1px;background:#e1e1e1;"></div>
<div style="left:42px;top:804px;width:1846px;height:1px;background:#e1e1e1;"></div>
<div style="left:42px;top:829px;width:1846px;height:1px;background:#e1e1e1;"></div>
<div style="left:42px;top:854px;width:1846px;height:1px;background:#e1e1e1;"></div>
<div style="left:42px;top:879px;width:1846px;height:1px;background:#e1e1e1;"></div>
<div style="left:42px;top:904px;width:1846px;height:1px;background:#e1e1e1;"></div>
<div style="left:42px;top:929px;width:1846px;height:1px;background:#e1e1e1;"></div>
<div style="left:42px;top:954px;width:1846px;height:1px;background:#e1e1e1;"></div>
<div style="left:42px;top:979px;width:1846px;height:1px;background:#e1e1e1;"></div>
<div style="left:163px;top:355px;width:1px;height:642px;background:#e1e1e1;"></div>
<div style="left:352px;top:355px;width:1px;height:642px;background:#e1e1e1;"></div>
<div style="left:813px;top:355px;width:1px;height:642px;background:#e1e1e1;"></div>
<div style="left:935px;top:355px;width:1px;height:642px;background:#e1e1e1;"></div>
<div style="left:1014px;top:355px;width:1px;height:642px;background:#e1e1e1;"></div>
<div style="left:1136px;top:355px;width:1px;height:642px;background:#e1e1e1;"></div>
<div style="left:1258px;top:355px;width:1px;height:642px;background:#e1e1e1;"></div>
<div style="left:1380px;top:355px;width:1px;height:642px;background:#e1e1e1;"></div>
<div style="left:1502px;top:355px;width:1px;height:642px;background:#e1e1e1;"></div>
<div style="left:1624px;top:355px;width:1px;height:642px;background:#e1e1e1;"></div>
<div style="left:1746px;top:355px;width:1px;height:642px;background:#e1e1e1;"></div>
<div style="left:1868px;top:355px;width:1px;height:642px;background:#e1e1e1;"></div>
<div style="left:1887px;top:355px;width:1px;height:642px;background:#e1e1e1;"></div>
<div style="left:41px;top:404px;width:1828px;height:26px;background:#ffff00;"></div>
<div style="left:41px;top:429px;width:1828px;height:26px;background:#ffff00;"></div>
<div style="left:1014px;top:454px;width:367px;height:26px;background:#ccffff;"></div>
<div style="left:1380px;top:454px;width:123px;height:26px;background:#ccffcc;"></div>
<div style="left:1502px;top:454px;width:123px;height:26px;background:#ccffff;"></div>
<div style="left:1014px;top:479px;width:367px;height:26px;background:#ccffff;"></div>
<div style="left:1380px;top:479px;width:123px;height:26px;background:#ccffcc;"></div>
<div style="left:1502px;top:479px;width:123px;height:26px;background:#ccffff;"></div>
<div style="left:1014px;top:504px;width:367px;height:26px;background:#ccffff;"></div>
<div style="left:1380px;top:504px;width:123px;height:26px;background:#ccffcc;"></div>
<div style="left:1502px;top:504px;width:123px;height:26px;background:#ccffff;"></div>
<div style="left:41px;top:529px;width:1828px;height:26px;background:#ffff00;"></div>
<div style="left:1014px;top:554px;width:367px;height:26px;background:#ccffff;"></div>
<div style="left:1380px;top:554px;width:123px;height:26px;background:#ccffcc;"></div>
<div style="left:1502px;top:554px;width:123px;height:26px;background:#ccffff;"></div>
<div style="left:1014px;top:579px;width:367px;height:26px;background:#ccffff;"></div>
<div style="left:1380px;top:579px;width:123px;height:26px;background:#ccffcc;"></div>
<div style="left:1502px;top:579px;width:123px;height:26px;background:#ccffff;"></div>
<div style="left:1014px;top:604px;width:367px;height:26px;background:#ccffff;"></div>
<div style="left:1380px;top:604px;width:123px;height:26px;background:#ccffcc;"></div>
<div style="left:1502px;top:604px;width:123px;height:26px;background:#ccffff;"></div>
<div style="left:1014px;top:629px;width:367px;height:26px;background:#ccffff;"></div>
<div style="left:1380px;top:629px;width:123px;height:26px;background:#ccffcc;"></div>
<div style="left:1502px;top:629px;width:123px;height:26px;background:#ccffff;"></div>
<div style="left:1014px;top:654px;width:367px;height:26px;background:#ccffff;"></div>
<div style="left:1380px;top:654px;width:123px;height:26px;background:#ccffcc;"></div>
<div style="left:1502px;top:654px;width:123px;height:26px;background:#ccffff;"></div>
<div style="left:41px;top:679px;width:1828px;height:26px;background:#ffff00;"></div>
<div style="left:1014px;top:704px;width:367px;height:26px;background:#ccffff;"></div>
<div style="left:1380px;top:704px;width:123px;height:26px;background:#ccffcc;"></div>
<div style="left:1502px;top:704px;width:123px;height:26px;background:#ccffff;"></div>
<div style="left:1014px;top:729px;width:367px;height:26px;background:#ccffff;"></div>
<div style="left:1380px;top:729px;width:123px;height:26px;background:#ccffcc;"></div>
<div style="left:1502px;top:729px;width:123px;height:26px;background:#ccffff;"></div>
<div style="left:1014px;top:754px;width:367px;height:26px;background:#ccffff;"></div>
<div style="left:1380px;top:754px;width:123px;height:26px;background:#ccffcc;"></div>
<div style="left:1502px;top:754px;width:123px;height:26px;background:#ccffff;"></div>
<div style="left:1014px;top:779px;width:367px;height:26px;background:#ccffff;"></div>
<div style="left:1380px;top:779px;width:123px;height:26px;background:#ccffcc;"></div>
<div style="left:1502px;top:779px;width:123px;height:26px;background:#ccffff;"></div>
<div style="left:41px;top:804px;width:1828px;height:26px;background:#ffff00;"></div>
<div style="left:1014px;top:829px;width:367px;height:26px;background:#ccffff;"></div>
<div style="left:1380px;top:829px;width:123px;height:26px;background:#ccffcc;"></div>
<div style="left:1502px;top:829px;width:123px;height:26px;background:#ccffff;"></div>
<div style="left:1014px;top:854px;width:367px;height:26px;background:#ccffff;"></div>
<div style="left:1380px;top:854px;width:123px;height:26px;background:#ccffcc;"></div>
<div style="left:1502px;top:854px;width:123px;height:26px;background:#ccffff;"></div>
<div style="left:1014px;top:879px;width:367px;height:26px;background:#ccffff;"></div>
<div style="left:1380px;top:879px;width:123px;height:26px;background:#ccffcc;"></div>
<div style="left:1502px;top:879px;width:123px;height:26px;background:#ccffff;"></div>
<div style="left:41px;top:904px;width:1828px;height:26px;background:#ffff00;"></div>
<div style="left:41px;top:929px;width:1828px;height:26px;background:#ffff00;"></div>
<div style="left:1014px;top:954px;width:367px;height:26px;background:#ccffff;"></div>
<div style="left:1380px;top:954px;width:123px;height:26px;background:#ccffcc;"></div>
<div style="left:1502px;top:954px;width:123px;height:26px;background:#ccffff;"></div>
<div style="left:41px;top:979px;width:1828px;height:18px;background:#ffff00;"></div>
<div style="left:0;top:355px;width:1888px;height:642px;overflow:hidden">
<span class="t" style="font-size:18.8px;font-weight:700;letter-spacing:-1.600px;line-height:21px;color:#000;top:3px;left:46.20px;">OZ</span>
<span class="t" style="font-size:18.8px;font-weight:700;letter-spacing:-0.243px;line-height:21px;color:#000;top:3px;left:166.90px;">PosArt</span>
<span class="t" style="font-size:18.8px;font-weight:700;letter-spacing:0.303px;line-height:21px;color:#000;top:3px;left:355.50px;">Kurztext</span>
<span class="t" style="font-size:18.8px;font-weight:700;letter-spacing:0.116px;line-height:21px;color:#000;top:3px;left:816.50px;">Menge</span>
<span class="t" style="font-size:18.8px;font-weight:700;letter-spacing:-0.142px;line-height:21px;color:#000;top:3px;left:938.00px;">Einheit</span>
<span class="t" style="font-size:18.8px;font-weight:700;letter-spacing:-0.020px;line-height:21px;color:#000;top:3px;left:1018.00px;">EP-Anteil 1</span>
<span class="t" style="font-size:18.8px;font-weight:700;letter-spacing:0.330px;line-height:21px;color:#000;top:3px;left:1140.00px;">EP-Anteil 2</span>
<span class="t" style="font-size:18.8px;font-weight:700;letter-spacing:0.330px;line-height:21px;color:#000;top:3px;left:1262.00px;">EP-Anteil 3</span>
<span class="t" style="font-size:18.8px;font-weight:700;letter-spacing:0.411px;line-height:21px;color:#000;top:3px;left:1384.00px;">EP-Kalk</span>
<span class="t" style="font-size:18.8px;font-weight:700;letter-spacing:-0.410px;line-height:21px;color:#000;top:3px;left:1506.00px;">Nachlaß %</span>
<span class="t" style="font-size:18.8px;font-weight:700;letter-spacing:-0.527px;line-height:21px;color:#000;top:3px;left:1628.00px;">EP</span>
<span class="t" style="font-size:18.8px;font-weight:700;letter-spacing:-1.600px;line-height:21px;color:#000;top:3px;left:1751.00px;">GP</span>
<span class="t" style="font-size:18.8px;font-weight:700;line-height:21px;color:#000;top:53px;left:54.60px;transform:scaleX(0.7000);transform-origin:0 50%;">1</span>
<span class="t" style="font-size:18.8px;font-weight:700;letter-spacing:-0.610px;line-height:21px;color:#000;top:53px;left:167.20px;">BEREICH</span>
<div style="left:353px;top:50px;width:460px;height:25px;overflow:hidden">
<span class="t" style="font-size:18.8px;font-weight:700;letter-spacing:0.163px;line-height:21px;color:#000;top:3px;left:3.40px;">Bauhauptgewerke</span>
</div>
<span class="t" style="font-size:18.8px;font-weight:700;letter-spacing:0.046px;line-height:21px;color:#000;top:53px;left:1810.00px;">0,00 €</span>
<span class="t" style="font-size:18.8px;font-weight:700;line-height:21px;color:#000;top:78px;left:54.50px;transform:scaleX(0.7958);transform-origin:0 50%;">1.</span>
<span class="t" style="font-size:18.8px;font-weight:700;line-height:21px;color:#000;top:78px;left:77.30px;transform:scaleX(0.7000);transform-origin:0 50%;">1</span>
<span class="t" style="font-size:18.8px;font-weight:700;letter-spacing:-0.610px;line-height:21px;color:#000;top:78px;left:167.20px;">BEREICH</span>
<div style="left:353px;top:75px;width:460px;height:25px;overflow:hidden">
<span class="t" style="font-size:18.8px;font-weight:700;letter-spacing:0.042px;line-height:21px;color:#000;top:3px;left:3.40px;">Baustelleneinrichtung</span>
</div>
<span class="t" style="font-size:18.8px;font-weight:700;letter-spacing:0.046px;line-height:21px;color:#000;top:78px;left:1810.00px;">0,00 €</span>
<span class="t" style="font-size:18.8px;font-weight:700;line-height:21px;color:#000;top:103px;left:54.50px;transform:scaleX(0.7958);transform-origin:0 50%;">1.</span>
<span class="t" style="font-size:18.8px;font-weight:700;line-height:21px;color:#000;top:103px;left:77.20px;transform:scaleX(0.7958);transform-origin:0 50%;">1.</span>
<span class="t" style="font-size:18.8px;font-weight:700;line-height:21px;color:#000;top:103px;left:98.32px;transform:scaleX(0.8845);transform-origin:0 50%;">10</span>
<span class="t" style="font-size:18.8px;letter-spacing:-0.081px;line-height:21px;color:#000;top:103px;left:167.20px;-webkit-text-stroke:0.3px #000;">NORMAL</span>
<div style="left:353px;top:100px;width:460px;height:25px;overflow:hidden">
<span class="t" style="font-size:18.8px;letter-spacing:0.780px;line-height:21px;color:#000;top:3px;left:3.40px;-webkit-text-stroke:0.3px #000;">Baustelleneinrichtung einrichten, vorhalten, räumen</span>
</div>
<span class="t" style="font-size:18.8px;letter-spacing:-0.513px;line-height:21px;color:#000;top:103px;left:886.50px;-webkit-text-stroke:0.3px #000;">1,000</span>
<span class="t" style="font-size:18.8px;letter-spacing:1.258px;line-height:21px;color:#000;top:103px;left:938.30px;-webkit-text-stroke:0.3px #000;">psch</span>
<span class="t" style="font-size:18.8px;letter-spacing:0.214px;line-height:21px;color:#000;top:103px;left:1067.00px;-webkit-text-stroke:0.3px #000;">0,000 €</span>
<span class="t" style="font-size:18.8px;letter-spacing:0.214px;line-height:21px;color:#000;top:103px;left:1189.00px;-webkit-text-stroke:0.3px #000;">0,000 €</span>
<span class="t" style="font-size:18.8px;letter-spacing:0.214px;line-height:21px;color:#000;top:103px;left:1311.00px;-webkit-text-stroke:0.3px #000;">0,000 €</span>
<span class="t" style="font-size:18.8px;letter-spacing:0.214px;line-height:21px;color:#000;top:103px;left:1433.00px;-webkit-text-stroke:0.3px #000;">0,000 €</span>
<span class="t" style="font-size:18.8px;letter-spacing:0.214px;line-height:21px;color:#000;top:103px;left:1677.00px;-webkit-text-stroke:0.3px #000;">0,000 €</span>
<span class="t" style="font-size:18.8px;letter-spacing:-0.682px;line-height:21px;color:#000;top:103px;left:1576.10px;-webkit-text-stroke:0.3px #000;">0,0</span>
<span class="t" style="font-size:18.8px;line-height:21px;color:#000;top:103px;left:1607.20px;transform:scaleX(0.7529);transform-origin:0 50%;-webkit-text-stroke:0.3px #000;">%</span>
<span class="t" style="font-size:18.8px;letter-spacing:0.046px;line-height:21px;color:#000;top:103px;left:1810.00px;-webkit-text-stroke:0.3px #000;">0,00 €</span>
<span class="t" style="font-size:18.8px;font-weight:700;line-height:21px;color:#000;top:128px;left:54.50px;transform:scaleX(0.7958);transform-origin:0 50%;">1.</span>
<span class="t" style="font-size:18.8px;font-weight:700;line-height:21px;color:#000;top:128px;left:77.20px;transform:scaleX(0.7958);transform-origin:0 50%;">1.</span>
<span class="t" style="font-size:18.8px;font-weight:700;line-height:21px;color:#000;top:128px;left:98.37px;transform:scaleX(0.8289);transform-origin:0 50%;">10.1</span>
<span class="t" style="font-size:18.8px;letter-spacing:-0.194px;line-height:21px;color:#000;top:128px;left:167.20px;-webkit-text-stroke:0.3px #000;">BEDARF(MIT GB)</span>
<div style="left:353px;top:125px;width:460px;height:25px;overflow:hidden">
<span class="t" style="font-size:18.8px;letter-spacing:0.855px;line-height:21px;color:#000;top:3px;left:3.40px;-webkit-text-stroke:0.3px #000;">Betreiben der Wasserhaltungsanlage</span>
</div>
<span class="t" style="font-size:18.8px;letter-spacing:-0.513px;line-height:21px;color:#000;top:128px;left:886.50px;-webkit-text-stroke:0.3px #000;">1,000</span>
<span class="t" style="font-size:18.8px;letter-spacing:0.897px;line-height:21px;color:#000;top:128px;left:938.30px;-webkit-text-stroke:0.3px #000;">Psch</span>
<span class="t" style="font-size:18.8px;letter-spacing:0.214px;line-height:21px;color:#000;top:128px;left:1067.00px;-webkit-text-stroke:0.3px #000;">0,000 €</span>
<span class="t" style="font-size:18.8px;letter-spacing:0.214px;line-height:21px;color:#000;top:128px;left:1189.00px;-webkit-text-stroke:0.3px #000;">0,000 €</span>
<span class="t" style="font-size:18.8px;letter-spacing:0.214px;line-height:21px;color:#000;top:128px;left:1311.00px;-webkit-text-stroke:0.3px #000;">0,000 €</span>
<span class="t" style="font-size:18.8px;letter-spacing:0.214px;line-height:21px;color:#000;top:128px;left:1433.00px;-webkit-text-stroke:0.3px #000;">0,000 €</span>
<span class="t" style="font-size:18.8px;letter-spacing:0.214px;line-height:21px;color:#000;top:128px;left:1677.00px;-webkit-text-stroke:0.3px #000;">0,000 €</span>
<span class="t" style="font-size:18.8px;letter-spacing:-0.682px;line-height:21px;color:#000;top:128px;left:1576.10px;-webkit-text-stroke:0.3px #000;">0,0</span>
<span class="t" style="font-size:18.8px;line-height:21px;color:#000;top:128px;left:1607.20px;transform:scaleX(0.7529);transform-origin:0 50%;-webkit-text-stroke:0.3px #000;">%</span>
<span class="t" style="font-size:18.8px;letter-spacing:0.046px;line-height:21px;color:#000;top:128px;left:1810.00px;-webkit-text-stroke:0.3px #000;">0,00 €</span>
<span class="t" style="font-size:18.8px;font-weight:700;line-height:21px;color:#000;top:153px;left:54.50px;transform:scaleX(0.7958);transform-origin:0 50%;">1.</span>
<span class="t" style="font-size:18.8px;font-weight:700;line-height:21px;color:#000;top:153px;left:77.20px;transform:scaleX(0.7958);transform-origin:0 50%;">1.</span>
<span class="t" style="font-size:18.8px;font-weight:700;line-height:21px;color:#000;top:153px;left:98.29px;transform:scaleX(0.9052);transform-origin:0 50%;">10.A</span>
<span class="t" style="font-size:18.8px;letter-spacing:-0.194px;line-height:21px;color:#000;top:153px;left:167.20px;-webkit-text-stroke:0.3px #000;">BEDARF(MIT GB)</span>
<div style="left:353px;top:150px;width:460px;height:25px;overflow:hidden">
<span class="t" style="font-size:18.8px;letter-spacing:0.835px;line-height:21px;color:#000;top:3px;left:3.40px;-webkit-text-stroke:0.3px #000;">Betreiben der Wasserhaltungsanlage mit Überwac</span>
</div>
<span class="t" style="font-size:18.8px;letter-spacing:-0.513px;line-height:21px;color:#000;top:153px;left:886.50px;-webkit-text-stroke:0.3px #000;">1,000</span>
<span class="t" style="font-size:18.8px;letter-spacing:-0.539px;line-height:21px;color:#000;top:153px;left:938.30px;-webkit-text-stroke:0.3px #000;">PSCH</span>
<span class="t" style="font-size:18.8px;letter-spacing:0.214px;line-height:21px;color:#000;top:153px;left:1067.00px;-webkit-text-stroke:0.3px #000;">0,000 €</span>
<span class="t" style="font-size:18.8px;letter-spacing:0.214px;line-height:21px;color:#000;top:153px;left:1189.00px;-webkit-text-stroke:0.3px #000;">0,000 €</span>
<span class="t" style="font-size:18.8px;letter-spacing:0.214px;line-height:21px;color:#000;top:153px;left:1311.00px;-webkit-text-stroke:0.3px #000;">0,000 €</span>
<span class="t" style="font-size:18.8px;letter-spacing:0.214px;line-height:21px;color:#000;top:153px;left:1433.00px;-webkit-text-stroke:0.3px #000;">0,000 €</span>
<span class="t" style="font-size:18.8px;letter-spacing:0.214px;line-height:21px;color:#000;top:153px;left:1677.00px;-webkit-text-stroke:0.3px #000;">0,000 €</span>
<span class="t" style="font-size:18.8px;letter-spacing:-0.682px;line-height:21px;color:#000;top:153px;left:1576.10px;-webkit-text-stroke:0.3px #000;">0,0</span>
<span class="t" style="font-size:18.8px;line-height:21px;color:#000;top:153px;left:1607.20px;transform:scaleX(0.7529);transform-origin:0 50%;-webkit-text-stroke:0.3px #000;">%</span>
<span class="t" style="font-size:18.8px;letter-spacing:0.046px;line-height:21px;color:#000;top:153px;left:1810.00px;-webkit-text-stroke:0.3px #000;">0,00 €</span>
<span class="t" style="font-size:18.8px;font-weight:700;line-height:21px;color:#000;top:178px;left:54.50px;transform:scaleX(0.7958);transform-origin:0 50%;">1.</span>
<span class="t" style="font-size:18.8px;font-weight:700;line-height:21px;color:#000;top:178px;left:78.00px;transform:scaleX(0.9400);transform-origin:0 50%;">2</span>
<span class="t" style="font-size:18.8px;font-weight:700;letter-spacing:-0.610px;line-height:21px;color:#000;top:178px;left:167.20px;">BEREICH</span>
<div style="left:353px;top:175px;width:460px;height:25px;overflow:hidden">
<span class="t" style="font-size:18.8px;font-weight:700;letter-spacing:0.320px;line-height:21px;color:#000;top:3px;left:3.40px;">Erdarbeiten</span>
</div>
<span class="t" style="font-size:18.8px;font-weight:700;letter-spacing:0.046px;line-height:21px;color:#000;top:178px;left:1810.00px;">0,00 €</span>
<span class="t" style="font-size:18.8px;font-weight:700;line-height:21px;color:#000;top:203px;left:54.50px;transform:scaleX(0.7958);transform-origin:0 50%;">1.</span>
<span class="t" style="font-size:18.8px;font-weight:700;line-height:21px;color:#000;top:203px;left:78.00px;transform:scaleX(0.9138);transform-origin:0 50%;">2.</span>
<span class="t" style="font-size:18.8px;font-weight:700;line-height:21px;color:#000;top:203px;left:101.32px;transform:scaleX(0.8845);transform-origin:0 50%;">10</span>
<span class="t" style="font-size:18.8px;letter-spacing:-0.081px;line-height:21px;color:#000;top:203px;left:167.20px;-webkit-text-stroke:0.3px #000;">NORMAL</span>
<div style="left:353px;top:200px;width:460px;height:25px;overflow:hidden">
<span class="t" style="font-size:18.8px;letter-spacing:0.556px;line-height:21px;color:#000;top:3px;left:3.40px;-webkit-text-stroke:0.3px #000;">Boden für Baugrube, BK 3</span>
</div>
<span class="t" style="font-size:18.8px;letter-spacing:0.193px;line-height:21px;color:#000;top:203px;left:862.40px;-webkit-text-stroke:0.3px #000;">450,000</span>
<span class="t" style="font-size:18.8px;line-height:21px;color:#000;top:203px;left:938.20px;transform:scaleX(1.0956);transform-origin:0 50%;-webkit-text-stroke:0.3px #000;">m3</span>
<span class="t" style="font-size:18.8px;letter-spacing:0.214px;line-height:21px;color:#000;top:203px;left:1067.00px;-webkit-text-stroke:0.3px #000;">0,000 €</span>
<span class="t" style="font-size:18.8px;letter-spacing:0.214px;line-height:21px;color:#000;top:203px;left:1189.00px;-webkit-text-stroke:0.3px #000;">0,000 €</span>
<span class="t" style="font-size:18.8px;letter-spacing:0.214px;line-height:21px;color:#000;top:203px;left:1311.00px;-webkit-text-stroke:0.3px #000;">0,000 €</span>
<span class="t" style="font-size:18.8px;letter-spacing:0.214px;line-height:21px;color:#000;top:203px;left:1433.00px;-webkit-text-stroke:0.3px #000;">0,000 €</span>
<span class="t" style="font-size:18.8px;letter-spacing:0.214px;line-height:21px;color:#000;top:203px;left:1677.00px;-webkit-text-stroke:0.3px #000;">0,000 €</span>
<span class="t" style="font-size:18.8px;letter-spacing:-0.682px;line-height:21px;color:#000;top:203px;left:1576.10px;-webkit-text-stroke:0.3px #000;">0,0</span>
<span class="t" style="font-size:18.8px;line-height:21px;color:#000;top:203px;left:1607.20px;transform:scaleX(0.7529);transform-origin:0 50%;-webkit-text-stroke:0.3px #000;">%</span>
<span class="t" style="font-size:18.8px;letter-spacing:0.046px;line-height:21px;color:#000;top:203px;left:1810.00px;-webkit-text-stroke:0.3px #000;">0,00 €</span>
<span class="t" style="font-size:18.8px;font-weight:700;line-height:21px;color:#000;top:228px;left:54.50px;transform:scaleX(0.7958);transform-origin:0 50%;">1.</span>
<span class="t" style="font-size:18.8px;font-weight:700;line-height:21px;color:#000;top:228px;left:78.00px;transform:scaleX(0.9138);transform-origin:0 50%;">2.</span>
<span class="t" style="font-size:18.8px;font-weight:700;line-height:21px;color:#000;top:228px;left:102.20px;transform:scaleX(0.9733);transform-origin:0 50%;">20</span>
<span class="t" style="font-size:18.8px;letter-spacing:-0.081px;line-height:21px;color:#000;top:228px;left:167.20px;-webkit-text-stroke:0.3px #000;">NORMAL</span>
<div style="left:353px;top:225px;width:460px;height:25px;overflow:hidden">
<span class="t" style="font-size:18.8px;letter-spacing:0.401px;line-height:21px;color:#000;top:3px;left:3.40px;-webkit-text-stroke:0.3px #000;">Boden Graben Kanal Tiefe bis 1,45 m lösen, lagern B</span>
</div>
<span class="t" style="font-size:18.8px;letter-spacing:-0.013px;line-height:21px;color:#000;top:228px;left:848.00px;-webkit-text-stroke:0.3px #000;">7.200,000</span>
<span class="t" style="font-size:18.8px;line-height:21px;color:#000;top:228px;left:938.20px;transform:scaleX(1.0956);transform-origin:0 50%;-webkit-text-stroke:0.3px #000;">m3</span>
<span class="t" style="font-size:18.8px;letter-spacing:0.214px;line-height:21px;color:#000;top:228px;left:1067.00px;-webkit-text-stroke:0.3px #000;">0,000 €</span>
<span class="t" style="font-size:18.8px;letter-spacing:0.214px;line-height:21px;color:#000;top:228px;left:1189.00px;-webkit-text-stroke:0.3px #000;">0,000 €</span>
<span class="t" style="font-size:18.8px;letter-spacing:0.214px;line-height:21px;color:#000;top:228px;left:1311.00px;-webkit-text-stroke:0.3px #000;">0,000 €</span>
<span class="t" style="font-size:18.8px;letter-spacing:0.214px;line-height:21px;color:#000;top:228px;left:1433.00px;-webkit-text-stroke:0.3px #000;">0,000 €</span>
<span class="t" style="font-size:18.8px;letter-spacing:0.214px;line-height:21px;color:#000;top:228px;left:1677.00px;-webkit-text-stroke:0.3px #000;">0,000 €</span>
<span class="t" style="font-size:18.8px;letter-spacing:-0.682px;line-height:21px;color:#000;top:228px;left:1576.10px;-webkit-text-stroke:0.3px #000;">0,0</span>
<span class="t" style="font-size:18.8px;line-height:21px;color:#000;top:228px;left:1607.20px;transform:scaleX(0.7529);transform-origin:0 50%;-webkit-text-stroke:0.3px #000;">%</span>
<span class="t" style="font-size:18.8px;letter-spacing:0.046px;line-height:21px;color:#000;top:228px;left:1810.00px;-webkit-text-stroke:0.3px #000;">0,00 €</span>
<span class="t" style="font-size:18.8px;font-weight:700;line-height:21px;color:#000;top:253px;left:54.50px;transform:scaleX(0.7958);transform-origin:0 50%;">1.</span>
<span class="t" style="font-size:18.8px;font-weight:700;line-height:21px;color:#000;top:253px;left:78.00px;transform:scaleX(0.9138);transform-origin:0 50%;">2.</span>
<span class="t" style="font-size:18.8px;font-weight:700;line-height:21px;color:#000;top:253px;left:102.20px;transform:scaleX(0.9733);transform-origin:0 50%;">30</span>
<span class="t" style="font-size:18.8px;letter-spacing:-0.081px;line-height:21px;color:#000;top:253px;left:167.20px;-webkit-text-stroke:0.3px #000;">NORMAL</span>
<div style="left:353px;top:250px;width:460px;height:25px;overflow:hidden">
<span class="t" style="font-size:18.8px;letter-spacing:0.545px;line-height:21px;color:#000;top:3px;left:4.40px;-webkit-text-stroke:0.3px #000;">Oberboden abtragen, lagern d= 30 cm Bodengruppe</span>
</div>
<span class="t" style="font-size:18.8px;letter-spacing:-0.291px;line-height:21px;color:#000;top:253px;left:865.30px;-webkit-text-stroke:0.3px #000;">124,000</span>
<span class="t" style="font-size:18.8px;line-height:21px;color:#000;top:253px;left:938.20px;transform:scaleX(1.0956);transform-origin:0 50%;-webkit-text-stroke:0.3px #000;">m2</span>
<span class="t" style="font-size:18.8px;letter-spacing:0.214px;line-height:21px;color:#000;top:253px;left:1067.00px;-webkit-text-stroke:0.3px #000;">0,000 €</span>
<span class="t" style="font-size:18.8px;letter-spacing:0.214px;line-height:21px;color:#000;top:253px;left:1189.00px;-webkit-text-stroke:0.3px #000;">0,000 €</span>
<span class="t" style="font-size:18.8px;letter-spacing:0.214px;line-height:21px;color:#000;top:253px;left:1311.00px;-webkit-text-stroke:0.3px #000;">0,000 €</span>
<span class="t" style="font-size:18.8px;letter-spacing:0.214px;line-height:21px;color:#000;top:253px;left:1433.00px;-webkit-text-stroke:0.3px #000;">0,000 €</span>
<span class="t" style="font-size:18.8px;letter-spacing:0.214px;line-height:21px;color:#000;top:253px;left:1677.00px;-webkit-text-stroke:0.3px #000;">0,000 €</span>
<span class="t" style="font-size:18.8px;letter-spacing:-0.682px;line-height:21px;color:#000;top:253px;left:1576.10px;-webkit-text-stroke:0.3px #000;">0,0</span>
<span class="t" style="font-size:18.8px;line-height:21px;color:#000;top:253px;left:1607.20px;transform:scaleX(0.7529);transform-origin:0 50%;-webkit-text-stroke:0.3px #000;">%</span>
<span class="t" style="font-size:18.8px;letter-spacing:0.046px;line-height:21px;color:#000;top:253px;left:1810.00px;-webkit-text-stroke:0.3px #000;">0,00 €</span>
<span class="t" style="font-size:18.8px;font-weight:700;line-height:21px;color:#000;top:278px;left:54.50px;transform:scaleX(0.7958);transform-origin:0 50%;">1.</span>
<span class="t" style="font-size:18.8px;font-weight:700;line-height:21px;color:#000;top:278px;left:78.00px;transform:scaleX(0.9138);transform-origin:0 50%;">2.</span>
<span class="t" style="font-size:18.8px;font-weight:700;line-height:21px;color:#000;top:278px;left:102.20px;transform:scaleX(0.9929);transform-origin:0 50%;">40</span>
<span class="t" style="font-size:18.8px;letter-spacing:-0.741px;line-height:21px;color:#000;top:278px;left:168.20px;-webkit-text-stroke:0.3px #000;">GRUNDPOS(1.0)</span>
<div style="left:353px;top:275px;width:460px;height:25px;overflow:hidden">
<span class="t" style="font-size:18.8px;letter-spacing:0.591px;line-height:21px;color:#000;top:3px;left:3.40px;-webkit-text-stroke:0.3px #000;">Betonpflaster L/B 100/100 mm H 80 mm  grau</span>
</div>
<span class="t" style="font-size:18.8px;letter-spacing:-0.163px;line-height:21px;color:#000;top:278px;left:849.20px;-webkit-text-stroke:0.3px #000;">1.245,000</span>
<span class="t" style="font-size:18.8px;line-height:21px;color:#000;top:278px;left:938.20px;transform:scaleX(1.0956);transform-origin:0 50%;-webkit-text-stroke:0.3px #000;">m2</span>
<span class="t" style="font-size:18.8px;letter-spacing:0.214px;line-height:21px;color:#000;top:278px;left:1067.00px;-webkit-text-stroke:0.3px #000;">0,000 €</span>
<span class="t" style="font-size:18.8px;letter-spacing:0.214px;line-height:21px;color:#000;top:278px;left:1189.00px;-webkit-text-stroke:0.3px #000;">0,000 €</span>
<span class="t" style="font-size:18.8px;letter-spacing:0.214px;line-height:21px;color:#000;top:278px;left:1311.00px;-webkit-text-stroke:0.3px #000;">0,000 €</span>
<span class="t" style="font-size:18.8px;letter-spacing:0.214px;line-height:21px;color:#000;top:278px;left:1433.00px;-webkit-text-stroke:0.3px #000;">0,000 €</span>
<span class="t" style="font-size:18.8px;letter-spacing:0.214px;line-height:21px;color:#000;top:278px;left:1677.00px;-webkit-text-stroke:0.3px #000;">0,000 €</span>
<span class="t" style="font-size:18.8px;letter-spacing:-0.682px;line-height:21px;color:#000;top:278px;left:1576.10px;-webkit-text-stroke:0.3px #000;">0,0</span>
<span class="t" style="font-size:18.8px;line-height:21px;color:#000;top:278px;left:1607.20px;transform:scaleX(0.7529);transform-origin:0 50%;-webkit-text-stroke:0.3px #000;">%</span>
<span class="t" style="font-size:18.8px;letter-spacing:0.046px;line-height:21px;color:#000;top:278px;left:1810.00px;-webkit-text-stroke:0.3px #000;">0,00 €</span>
<span class="t" style="font-size:18.8px;font-weight:700;line-height:21px;color:#000;top:303px;left:54.50px;transform:scaleX(0.7958);transform-origin:0 50%;">1.</span>
<span class="t" style="font-size:18.8px;font-weight:700;line-height:21px;color:#000;top:303px;left:78.00px;transform:scaleX(0.9138);transform-origin:0 50%;">2.</span>
<span class="t" style="font-size:18.8px;font-weight:700;line-height:21px;color:#000;top:303px;left:102.20px;transform:scaleX(0.9733);transform-origin:0 50%;">50</span>
<span class="t" style="font-size:18.8px;letter-spacing:-0.609px;line-height:21px;color:#000;top:303px;left:168.20px;-webkit-text-stroke:0.3px #000;">WAHLPOS(1.1 zu 1.0)</span>
<div style="left:353px;top:300px;width:460px;height:25px;overflow:hidden">
<span class="t" style="font-size:18.8px;letter-spacing:0.532px;line-height:21px;color:#000;top:3px;left:3.40px;-webkit-text-stroke:0.3px #000;">Betonpflaster L/B 100/100 mm H 80 mm  in BVBS-b</span>
</div>
<span class="t" style="font-size:18.8px;letter-spacing:-0.163px;line-height:21px;color:#000;top:303px;left:849.20px;-webkit-text-stroke:0.3px #000;">1.245,000</span>
<span class="t" style="font-size:18.8px;line-height:21px;color:#000;top:303px;left:938.20px;transform:scaleX(1.0956);transform-origin:0 50%;-webkit-text-stroke:0.3px #000;">m2</span>
<span class="t" style="font-size:18.8px;letter-spacing:0.214px;line-height:21px;color:#000;top:303px;left:1067.00px;-webkit-text-stroke:0.3px #000;">0,000 €</span>
<span class="t" style="font-size:18.8px;letter-spacing:0.214px;line-height:21px;color:#000;top:303px;left:1189.00px;-webkit-text-stroke:0.3px #000;">0,000 €</span>
<span class="t" style="font-size:18.8px;letter-spacing:0.214px;line-height:21px;color:#000;top:303px;left:1311.00px;-webkit-text-stroke:0.3px #000;">0,000 €</span>
<span class="t" style="font-size:18.8px;letter-spacing:0.214px;line-height:21px;color:#000;top:303px;left:1433.00px;-webkit-text-stroke:0.3px #000;">0,000 €</span>
<span class="t" style="font-size:18.8px;letter-spacing:0.214px;line-height:21px;color:#000;top:303px;left:1677.00px;-webkit-text-stroke:0.3px #000;">0,000 €</span>
<span class="t" style="font-size:18.8px;letter-spacing:-0.682px;line-height:21px;color:#000;top:303px;left:1576.10px;-webkit-text-stroke:0.3px #000;">0,0</span>
<span class="t" style="font-size:18.8px;line-height:21px;color:#000;top:303px;left:1607.20px;transform:scaleX(0.7529);transform-origin:0 50%;-webkit-text-stroke:0.3px #000;">%</span>
<span class="t" style="font-size:18.8px;letter-spacing:0.622px;line-height:21px;color:#000;top:303px;left:1750.00px;-webkit-text-stroke:0.3px #000;">nur EP</span>
<span class="t" style="font-size:18.8px;font-weight:700;line-height:21px;color:#000;top:328px;left:54.50px;transform:scaleX(0.7958);transform-origin:0 50%;">1.</span>
<span class="t" style="font-size:18.8px;font-weight:700;line-height:21px;color:#000;top:328px;left:78.00px;transform:scaleX(0.9400);transform-origin:0 50%;">3</span>
<span class="t" style="font-size:18.8px;font-weight:700;letter-spacing:-0.610px;line-height:21px;color:#000;top:328px;left:167.20px;">BEREICH</span>
<div style="left:353px;top:325px;width:460px;height:25px;overflow:hidden">
<span class="t" style="font-size:18.8px;font-weight:700;letter-spacing:0.545px;line-height:21px;color:#000;top:3px;left:3.40px;">Maurerarbeiten</span>
</div>
<span class="t" style="font-size:18.8px;font-weight:700;letter-spacing:0.046px;line-height:21px;color:#000;top:328px;left:1810.00px;">0,00 €</span>
<span class="t" style="font-size:18.8px;font-weight:700;line-height:21px;color:#000;top:353px;left:54.50px;transform:scaleX(0.7958);transform-origin:0 50%;">1.</span>
<span class="t" style="font-size:18.8px;font-weight:700;line-height:21px;color:#000;top:353px;left:78.00px;transform:scaleX(0.9138);transform-origin:0 50%;">3.</span>
<span class="t" style="font-size:18.8px;font-weight:700;line-height:21px;color:#000;top:353px;left:101.32px;transform:scaleX(0.8845);transform-origin:0 50%;">10</span>
<span class="t" style="font-size:18.8px;letter-spacing:-0.081px;line-height:21px;color:#000;top:353px;left:167.20px;-webkit-text-stroke:0.3px #000;">NORMAL</span>
<div style="left:353px;top:350px;width:460px;height:25px;overflow:hidden">
<span class="t" style="font-size:18.8px;letter-spacing:0.260px;line-height:21px;color:#000;top:3px;left:3.40px;-webkit-text-stroke:0.3px #000;">Kalksandstein-Innenwand KS-R SFK 20 RDK 1,8 D 1</span>
</div>
<span class="t" style="font-size:18.8px;letter-spacing:0.193px;line-height:21px;color:#000;top:353px;left:862.40px;-webkit-text-stroke:0.3px #000;">440,000</span>
<span class="t" style="font-size:18.8px;line-height:21px;color:#000;top:353px;left:938.20px;transform:scaleX(1.0956);transform-origin:0 50%;-webkit-text-stroke:0.3px #000;">m2</span>
<span class="t" style="font-size:18.8px;letter-spacing:0.214px;line-height:21px;color:#000;top:353px;left:1067.00px;-webkit-text-stroke:0.3px #000;">0,000 €</span>
<span class="t" style="font-size:18.8px;letter-spacing:0.214px;line-height:21px;color:#000;top:353px;left:1189.00px;-webkit-text-stroke:0.3px #000;">0,000 €</span>
<span class="t" style="font-size:18.8px;letter-spacing:0.214px;line-height:21px;color:#000;top:353px;left:1311.00px;-webkit-text-stroke:0.3px #000;">0,000 €</span>
<span class="t" style="font-size:18.8px;letter-spacing:0.214px;line-height:21px;color:#000;top:353px;left:1433.00px;-webkit-text-stroke:0.3px #000;">0,000 €</span>
<span class="t" style="font-size:18.8px;letter-spacing:0.214px;line-height:21px;color:#000;top:353px;left:1677.00px;-webkit-text-stroke:0.3px #000;">0,000 €</span>
<span class="t" style="font-size:18.8px;letter-spacing:-0.682px;line-height:21px;color:#000;top:353px;left:1576.10px;-webkit-text-stroke:0.3px #000;">0,0</span>
<span class="t" style="font-size:18.8px;line-height:21px;color:#000;top:353px;left:1607.20px;transform:scaleX(0.7529);transform-origin:0 50%;-webkit-text-stroke:0.3px #000;">%</span>
<span class="t" style="font-size:18.8px;letter-spacing:0.046px;line-height:21px;color:#000;top:353px;left:1810.00px;-webkit-text-stroke:0.3px #000;">0,00 €</span>
<span class="t" style="font-size:18.8px;font-weight:700;line-height:21px;color:#000;top:378px;left:54.50px;transform:scaleX(0.7958);transform-origin:0 50%;">1.</span>
<span class="t" style="font-size:18.8px;font-weight:700;line-height:21px;color:#000;top:378px;left:78.00px;transform:scaleX(0.9138);transform-origin:0 50%;">3.</span>
<span class="t" style="font-size:18.8px;font-weight:700;line-height:21px;color:#000;top:378px;left:102.20px;transform:scaleX(0.9733);transform-origin:0 50%;">20</span>
<span class="t" style="font-size:18.8px;letter-spacing:-0.081px;line-height:21px;color:#000;top:378px;left:167.20px;-webkit-text-stroke:0.3px #000;">NORMAL</span>
<div style="left:353px;top:375px;width:460px;height:25px;overflow:hidden">
<span class="t" style="font-size:18.8px;letter-spacing:0.260px;line-height:21px;color:#000;top:3px;left:3.40px;-webkit-text-stroke:0.3px #000;">Kalksandstein-Innenwand KS-R SFK 20 RDK 1,8 D 1</span>
</div>
<span class="t" style="font-size:18.8px;letter-spacing:0.193px;line-height:21px;color:#000;top:378px;left:862.40px;-webkit-text-stroke:0.3px #000;">350,000</span>
<span class="t" style="font-size:18.8px;line-height:21px;color:#000;top:378px;left:938.20px;transform:scaleX(1.0956);transform-origin:0 50%;-webkit-text-stroke:0.3px #000;">m2</span>
<span class="t" style="font-size:18.8px;letter-spacing:0.214px;line-height:21px;color:#000;top:378px;left:1067.00px;-webkit-text-stroke:0.3px #000;">0,000 €</span>
<span class="t" style="font-size:18.8px;letter-spacing:0.214px;line-height:21px;color:#000;top:378px;left:1189.00px;-webkit-text-stroke:0.3px #000;">0,000 €</span>
<span class="t" style="font-size:18.8px;letter-spacing:0.214px;line-height:21px;color:#000;top:378px;left:1311.00px;-webkit-text-stroke:0.3px #000;">0,000 €</span>
<span class="t" style="font-size:18.8px;letter-spacing:0.214px;line-height:21px;color:#000;top:378px;left:1433.00px;-webkit-text-stroke:0.3px #000;">0,000 €</span>
<span class="t" style="font-size:18.8px;letter-spacing:0.214px;line-height:21px;color:#000;top:378px;left:1677.00px;-webkit-text-stroke:0.3px #000;">0,000 €</span>
<span class="t" style="font-size:18.8px;letter-spacing:-0.682px;line-height:21px;color:#000;top:378px;left:1576.10px;-webkit-text-stroke:0.3px #000;">0,0</span>
<span class="t" style="font-size:18.8px;line-height:21px;color:#000;top:378px;left:1607.20px;transform:scaleX(0.7529);transform-origin:0 50%;-webkit-text-stroke:0.3px #000;">%</span>
<span class="t" style="font-size:18.8px;letter-spacing:0.046px;line-height:21px;color:#000;top:378px;left:1810.00px;-webkit-text-stroke:0.3px #000;">0,00 €</span>
<span class="t" style="font-size:18.8px;font-weight:700;line-height:21px;color:#000;top:403px;left:54.50px;transform:scaleX(0.7958);transform-origin:0 50%;">1.</span>
<span class="t" style="font-size:18.8px;font-weight:700;line-height:21px;color:#000;top:403px;left:78.00px;transform:scaleX(0.9138);transform-origin:0 50%;">3.</span>
<span class="t" style="font-size:18.8px;font-weight:700;line-height:21px;color:#000;top:403px;left:102.20px;transform:scaleX(0.9733);transform-origin:0 50%;">30</span>
<span class="t" style="font-size:18.8px;letter-spacing:-0.081px;line-height:21px;color:#000;top:403px;left:167.20px;-webkit-text-stroke:0.3px #000;">NORMAL</span>
<div style="left:353px;top:400px;width:460px;height:25px;overflow:hidden">
<span class="t" style="font-size:18.8px;letter-spacing:0.510px;line-height:21px;color:#000;top:3px;left:4.40px;-webkit-text-stroke:0.3px #000;">Außenwand Porenbeton-Planelement SFK 4 D 36,5</span>
</div>
<span class="t" style="font-size:18.8px;letter-spacing:0.193px;line-height:21px;color:#000;top:403px;left:862.40px;-webkit-text-stroke:0.3px #000;">750,000</span>
<span class="t" style="font-size:18.8px;line-height:21px;color:#000;top:403px;left:938.20px;transform:scaleX(1.0956);transform-origin:0 50%;-webkit-text-stroke:0.3px #000;">m3</span>
<span class="t" style="font-size:18.8px;letter-spacing:0.214px;line-height:21px;color:#000;top:403px;left:1067.00px;-webkit-text-stroke:0.3px #000;">0,000 €</span>
<span class="t" style="font-size:18.8px;letter-spacing:0.214px;line-height:21px;color:#000;top:403px;left:1189.00px;-webkit-text-stroke:0.3px #000;">0,000 €</span>
<span class="t" style="font-size:18.8px;letter-spacing:0.214px;line-height:21px;color:#000;top:403px;left:1311.00px;-webkit-text-stroke:0.3px #000;">0,000 €</span>
<span class="t" style="font-size:18.8px;letter-spacing:0.214px;line-height:21px;color:#000;top:403px;left:1433.00px;-webkit-text-stroke:0.3px #000;">0,000 €</span>
<span class="t" style="font-size:18.8px;letter-spacing:0.214px;line-height:21px;color:#000;top:403px;left:1677.00px;-webkit-text-stroke:0.3px #000;">0,000 €</span>
<span class="t" style="font-size:18.8px;letter-spacing:-0.682px;line-height:21px;color:#000;top:403px;left:1576.10px;-webkit-text-stroke:0.3px #000;">0,0</span>
<span class="t" style="font-size:18.8px;line-height:21px;color:#000;top:403px;left:1607.20px;transform:scaleX(0.7529);transform-origin:0 50%;-webkit-text-stroke:0.3px #000;">%</span>
<span class="t" style="font-size:18.8px;letter-spacing:0.046px;line-height:21px;color:#000;top:403px;left:1810.00px;-webkit-text-stroke:0.3px #000;">0,00 €</span>
<span class="t" style="font-size:18.8px;font-weight:700;line-height:21px;color:#000;top:428px;left:54.50px;transform:scaleX(0.7958);transform-origin:0 50%;">1.</span>
<span class="t" style="font-size:18.8px;font-weight:700;line-height:21px;color:#000;top:428px;left:78.00px;transform:scaleX(0.9138);transform-origin:0 50%;">3.</span>
<span class="t" style="font-size:18.8px;font-weight:700;line-height:21px;color:#000;top:428px;left:102.20px;transform:scaleX(0.9929);transform-origin:0 50%;">40</span>
<span class="t" style="font-size:18.8px;letter-spacing:-0.081px;line-height:21px;color:#000;top:428px;left:167.20px;-webkit-text-stroke:0.3px #000;">NORMAL</span>
<div style="left:353px;top:425px;width:460px;height:25px;overflow:hidden">
<span class="t" style="font-size:18.8px;letter-spacing:-0.032px;line-height:21px;color:#000;top:3px;left:4.40px;-webkit-text-stroke:0.3px #000;">Außenwand VHLz SFK 28 RDK 1,6 D 36,5cm</span>
</div>
<span class="t" style="font-size:18.8px;letter-spacing:0.193px;line-height:21px;color:#000;top:428px;left:862.40px;-webkit-text-stroke:0.3px #000;">783,030</span>
<span class="t" style="font-size:18.8px;line-height:21px;color:#000;top:428px;left:938.20px;transform:scaleX(1.0956);transform-origin:0 50%;-webkit-text-stroke:0.3px #000;">m3</span>
<span class="t" style="font-size:18.8px;letter-spacing:0.214px;line-height:21px;color:#000;top:428px;left:1067.00px;-webkit-text-stroke:0.3px #000;">0,000 €</span>
<span class="t" style="font-size:18.8px;letter-spacing:0.214px;line-height:21px;color:#000;top:428px;left:1189.00px;-webkit-text-stroke:0.3px #000;">0,000 €</span>
<span class="t" style="font-size:18.8px;letter-spacing:0.214px;line-height:21px;color:#000;top:428px;left:1311.00px;-webkit-text-stroke:0.3px #000;">0,000 €</span>
<span class="t" style="font-size:18.8px;letter-spacing:0.214px;line-height:21px;color:#000;top:428px;left:1433.00px;-webkit-text-stroke:0.3px #000;">0,000 €</span>
<span class="t" style="font-size:18.8px;letter-spacing:0.214px;line-height:21px;color:#000;top:428px;left:1677.00px;-webkit-text-stroke:0.3px #000;">0,000 €</span>
<span class="t" style="font-size:18.8px;letter-spacing:-0.682px;line-height:21px;color:#000;top:428px;left:1576.10px;-webkit-text-stroke:0.3px #000;">0,0</span>
<span class="t" style="font-size:18.8px;line-height:21px;color:#000;top:428px;left:1607.20px;transform:scaleX(0.7529);transform-origin:0 50%;-webkit-text-stroke:0.3px #000;">%</span>
<span class="t" style="font-size:18.8px;letter-spacing:0.046px;line-height:21px;color:#000;top:428px;left:1810.00px;-webkit-text-stroke:0.3px #000;">0,00 €</span>
<span class="t" style="font-size:18.8px;font-weight:700;line-height:21px;color:#000;top:453px;left:54.50px;transform:scaleX(0.7958);transform-origin:0 50%;">1.</span>
<span class="t" style="font-size:18.8px;font-weight:700;line-height:21px;color:#000;top:453px;left:78.00px;transform:scaleX(0.8909);transform-origin:0 50%;">4</span>
<span class="t" style="font-size:18.8px;font-weight:700;letter-spacing:-0.610px;line-height:21px;color:#000;top:453px;left:167.20px;">BEREICH</span>
<div style="left:353px;top:450px;width:460px;height:25px;overflow:hidden">
<span class="t" style="font-size:18.8px;font-weight:700;letter-spacing:0.150px;line-height:21px;color:#000;top:3px;left:3.40px;">Betonarbeiten</span>
</div>
<span class="t" style="font-size:18.8px;font-weight:700;letter-spacing:0.046px;line-height:21px;color:#000;top:453px;left:1810.00px;">0,00 €</span>
<span class="t" style="font-size:18.8px;font-weight:700;line-height:21px;color:#000;top:478px;left:54.50px;transform:scaleX(0.7958);transform-origin:0 50%;">1.</span>
<span class="t" style="font-size:18.8px;font-weight:700;line-height:21px;color:#000;top:478px;left:78.00px;transform:scaleX(0.9415);transform-origin:0 50%;">4.</span>
<span class="t" style="font-size:18.8px;font-weight:700;line-height:21px;color:#000;top:478px;left:101.32px;transform:scaleX(0.8845);transform-origin:0 50%;">10</span>
<span class="t" style="font-size:18.8px;letter-spacing:-0.081px;line-height:21px;color:#000;top:478px;left:167.20px;-webkit-text-stroke:0.3px #000;">NORMAL</span>
<div style="left:353px;top:475px;width:460px;height:25px;overflow:hidden">
<span class="t" style="font-size:18.8px;letter-spacing:0.654px;line-height:21px;color:#000;top:3px;left:4.40px;-webkit-text-stroke:0.3px #000;">Schalung Deckenplatte GF-Schalungsplatten H 2-3</span>
</div>
<span class="t" style="font-size:18.8px;letter-spacing:0.193px;line-height:21px;color:#000;top:478px;left:862.40px;-webkit-text-stroke:0.3px #000;">500,000</span>
<span class="t" style="font-size:18.8px;line-height:21px;color:#000;top:478px;left:938.20px;transform:scaleX(1.0956);transform-origin:0 50%;-webkit-text-stroke:0.3px #000;">m2</span>
<span class="t" style="font-size:18.8px;letter-spacing:0.214px;line-height:21px;color:#000;top:478px;left:1067.00px;-webkit-text-stroke:0.3px #000;">0,000 €</span>
<span class="t" style="font-size:18.8px;letter-spacing:0.214px;line-height:21px;color:#000;top:478px;left:1189.00px;-webkit-text-stroke:0.3px #000;">0,000 €</span>
<span class="t" style="font-size:18.8px;letter-spacing:0.214px;line-height:21px;color:#000;top:478px;left:1311.00px;-webkit-text-stroke:0.3px #000;">0,000 €</span>
<span class="t" style="font-size:18.8px;letter-spacing:0.214px;line-height:21px;color:#000;top:478px;left:1433.00px;-webkit-text-stroke:0.3px #000;">0,000 €</span>
<span class="t" style="font-size:18.8px;letter-spacing:0.214px;line-height:21px;color:#000;top:478px;left:1677.00px;-webkit-text-stroke:0.3px #000;">0,000 €</span>
<span class="t" style="font-size:18.8px;letter-spacing:-0.682px;line-height:21px;color:#000;top:478px;left:1576.10px;-webkit-text-stroke:0.3px #000;">0,0</span>
<span class="t" style="font-size:18.8px;line-height:21px;color:#000;top:478px;left:1607.20px;transform:scaleX(0.7529);transform-origin:0 50%;-webkit-text-stroke:0.3px #000;">%</span>
<span class="t" style="font-size:18.8px;letter-spacing:0.046px;line-height:21px;color:#000;top:478px;left:1810.00px;-webkit-text-stroke:0.3px #000;">0,00 €</span>
<span class="t" style="font-size:18.8px;font-weight:700;line-height:21px;color:#000;top:503px;left:54.50px;transform:scaleX(0.7958);transform-origin:0 50%;">1.</span>
<span class="t" style="font-size:18.8px;font-weight:700;line-height:21px;color:#000;top:503px;left:78.00px;transform:scaleX(0.9415);transform-origin:0 50%;">4.</span>
<span class="t" style="font-size:18.8px;font-weight:700;line-height:21px;color:#000;top:503px;left:102.20px;transform:scaleX(0.9733);transform-origin:0 50%;">20</span>
<span class="t" style="font-size:18.8px;letter-spacing:-0.081px;line-height:21px;color:#000;top:503px;left:167.20px;-webkit-text-stroke:0.3px #000;">NORMAL</span>
<div style="left:353px;top:500px;width:460px;height:25px;overflow:hidden">
<span class="t" style="font-size:18.8px;letter-spacing:0.580px;line-height:21px;color:#000;top:3px;left:4.40px;-webkit-text-stroke:0.3px #000;">Ortbeton Deckenplatte Stahlbeton C20/25 D 20cm</span>
</div>
<span class="t" style="font-size:18.8px;letter-spacing:0.193px;line-height:21px;color:#000;top:503px;left:862.40px;-webkit-text-stroke:0.3px #000;">500,000</span>
<span class="t" style="font-size:18.8px;line-height:21px;color:#000;top:503px;left:938.20px;transform:scaleX(1.0956);transform-origin:0 50%;-webkit-text-stroke:0.3px #000;">m2</span>
<span class="t" style="font-size:18.8px;letter-spacing:0.214px;line-height:21px;color:#000;top:503px;left:1067.00px;-webkit-text-stroke:0.3px #000;">0,000 €</span>
<span class="t" style="font-size:18.8px;letter-spacing:0.214px;line-height:21px;color:#000;top:503px;left:1189.00px;-webkit-text-stroke:0.3px #000;">0,000 €</span>
<span class="t" style="font-size:18.8px;letter-spacing:0.214px;line-height:21px;color:#000;top:503px;left:1311.00px;-webkit-text-stroke:0.3px #000;">0,000 €</span>
<span class="t" style="font-size:18.8px;letter-spacing:0.214px;line-height:21px;color:#000;top:503px;left:1433.00px;-webkit-text-stroke:0.3px #000;">0,000 €</span>
<span class="t" style="font-size:18.8px;letter-spacing:0.214px;line-height:21px;color:#000;top:503px;left:1677.00px;-webkit-text-stroke:0.3px #000;">0,000 €</span>
<span class="t" style="font-size:18.8px;letter-spacing:-0.682px;line-height:21px;color:#000;top:503px;left:1576.10px;-webkit-text-stroke:0.3px #000;">0,0</span>
<span class="t" style="font-size:18.8px;line-height:21px;color:#000;top:503px;left:1607.20px;transform:scaleX(0.7529);transform-origin:0 50%;-webkit-text-stroke:0.3px #000;">%</span>
<span class="t" style="font-size:18.8px;letter-spacing:0.046px;line-height:21px;color:#000;top:503px;left:1810.00px;-webkit-text-stroke:0.3px #000;">0,00 €</span>
<span class="t" style="font-size:18.8px;font-weight:700;line-height:21px;color:#000;top:528px;left:54.50px;transform:scaleX(0.7958);transform-origin:0 50%;">1.</span>
<span class="t" style="font-size:18.8px;font-weight:700;line-height:21px;color:#000;top:528px;left:78.00px;transform:scaleX(0.9415);transform-origin:0 50%;">4.</span>
<span class="t" style="font-size:18.8px;font-weight:700;line-height:21px;color:#000;top:528px;left:102.20px;transform:scaleX(0.9733);transform-origin:0 50%;">30</span>
<span class="t" style="font-size:18.8px;letter-spacing:-0.081px;line-height:21px;color:#000;top:528px;left:167.20px;-webkit-text-stroke:0.3px #000;">NORMAL</span>
<div style="left:353px;top:525px;width:460px;height:25px;overflow:hidden">
<span class="t" style="font-size:18.8px;letter-spacing:0.531px;line-height:21px;color:#000;top:3px;left:4.40px;-webkit-text-stroke:0.3px #000;">Ortbeton Außenwand D 24cm Stahlbeton C35/45</span>
</div>
<span class="t" style="font-size:18.8px;letter-spacing:0.193px;line-height:21px;color:#000;top:528px;left:862.40px;-webkit-text-stroke:0.3px #000;">267,000</span>
<span class="t" style="font-size:18.8px;line-height:21px;color:#000;top:528px;left:938.20px;transform:scaleX(1.0956);transform-origin:0 50%;-webkit-text-stroke:0.3px #000;">m3</span>
<span class="t" style="font-size:18.8px;letter-spacing:0.214px;line-height:21px;color:#000;top:528px;left:1067.00px;-webkit-text-stroke:0.3px #000;">0,000 €</span>
<span class="t" style="font-size:18.8px;letter-spacing:0.214px;line-height:21px;color:#000;top:528px;left:1189.00px;-webkit-text-stroke:0.3px #000;">0,000 €</span>
<span class="t" style="font-size:18.8px;letter-spacing:0.214px;line-height:21px;color:#000;top:528px;left:1311.00px;-webkit-text-stroke:0.3px #000;">0,000 €</span>
<span class="t" style="font-size:18.8px;letter-spacing:0.214px;line-height:21px;color:#000;top:528px;left:1433.00px;-webkit-text-stroke:0.3px #000;">0,000 €</span>
<span class="t" style="font-size:18.8px;letter-spacing:0.214px;line-height:21px;color:#000;top:528px;left:1677.00px;-webkit-text-stroke:0.3px #000;">0,000 €</span>
<span class="t" style="font-size:18.8px;letter-spacing:-0.682px;line-height:21px;color:#000;top:528px;left:1576.10px;-webkit-text-stroke:0.3px #000;">0,0</span>
<span class="t" style="font-size:18.8px;line-height:21px;color:#000;top:528px;left:1607.20px;transform:scaleX(0.7529);transform-origin:0 50%;-webkit-text-stroke:0.3px #000;">%</span>
<span class="t" style="font-size:18.8px;letter-spacing:0.046px;line-height:21px;color:#000;top:528px;left:1810.00px;-webkit-text-stroke:0.3px #000;">0,00 €</span>
<span class="t" style="font-size:18.8px;font-weight:700;line-height:21px;color:#000;top:553px;left:55.30px;transform:scaleX(0.9400);transform-origin:0 50%;">2</span>
<span class="t" style="font-size:18.8px;font-weight:700;letter-spacing:-0.610px;line-height:21px;color:#000;top:553px;left:167.20px;">BEREICH</span>
<div style="left:353px;top:550px;width:460px;height:25px;overflow:hidden">
<span class="t" style="font-size:18.8px;font-weight:700;letter-spacing:0.149px;line-height:21px;color:#000;top:3px;left:3.40px;">Baunebengewerke</span>
</div>
<span class="t" style="font-size:18.8px;font-weight:700;letter-spacing:0.046px;line-height:21px;color:#000;top:553px;left:1810.00px;">0,00 €</span>
<span class="t" style="font-size:18.8px;font-weight:700;line-height:21px;color:#000;top:578px;left:55.30px;transform:scaleX(0.9138);transform-origin:0 50%;">2.</span>
<span class="t" style="font-size:18.8px;font-weight:700;line-height:21px;color:#000;top:578px;left:81.00px;transform:scaleX(0.9400);transform-origin:0 50%;">0</span>
<span class="t" style="font-size:18.8px;font-weight:700;letter-spacing:-0.610px;line-height:21px;color:#000;top:578px;left:167.20px;">BEREICH</span>
<div style="left:353px;top:575px;width:460px;height:25px;overflow:hidden">
<span class="t" style="font-size:18.8px;font-weight:700;letter-spacing:0.137px;line-height:21px;color:#000;top:3px;left:3.40px;">Baunebengewerk Titel 0</span>
</div>
<span class="t" style="font-size:18.8px;font-weight:700;letter-spacing:0.046px;line-height:21px;color:#000;top:578px;left:1810.00px;">0,00 €</span>
<span class="t" style="font-size:18.8px;font-weight:700;line-height:21px;color:#000;top:603px;left:55.30px;transform:scaleX(0.9138);transform-origin:0 50%;">2.</span>
<span class="t" style="font-size:18.8px;font-weight:700;line-height:21px;color:#000;top:603px;left:81.00px;transform:scaleX(0.9000);transform-origin:0 50%;">0.</span>
<span class="t" style="font-size:18.8px;font-weight:700;line-height:21px;color:#000;top:603px;left:112.00px;transform:scaleX(0.9400);transform-origin:0 50%;">0</span>
<span class="t" style="font-size:18.8px;letter-spacing:-0.081px;line-height:21px;color:#000;top:603px;left:167.20px;-webkit-text-stroke:0.3px #000;">NORMAL</span>
<div style="left:353px;top:600px;width:460px;height:25px;overflow:hidden">
<span class="t" style="font-size:18.8px;letter-spacing:0.694px;line-height:21px;color:#000;top:3px;left:3.40px;-webkit-text-stroke:0.3px #000;">Baunebengewerk Position 0</span>
</div>
<span class="t" style="font-size:18.8px;letter-spacing:-0.513px;line-height:21px;color:#000;top:603px;left:886.50px;-webkit-text-stroke:0.3px #000;">1,000</span>
<span class="t" style="font-size:18.8px;letter-spacing:0.621px;line-height:21px;color:#000;top:603px;left:939.30px;-webkit-text-stroke:0.3px #000;">Stck</span>
<span class="t" style="font-size:18.8px;letter-spacing:0.214px;line-height:21px;color:#000;top:603px;left:1067.00px;-webkit-text-stroke:0.3px #000;">0,000 €</span>
<span class="t" style="font-size:18.8px;letter-spacing:0.214px;line-height:21px;color:#000;top:603px;left:1189.00px;-webkit-text-stroke:0.3px #000;">0,000 €</span>
<span class="t" style="font-size:18.8px;letter-spacing:0.214px;line-height:21px;color:#000;top:603px;left:1311.00px;-webkit-text-stroke:0.3px #000;">0,000 €</span>
<span class="t" style="font-size:18.8px;letter-spacing:0.214px;line-height:21px;color:#000;top:603px;left:1433.00px;-webkit-text-stroke:0.3px #000;">0,000 €</span>
<span class="t" style="font-size:18.8px;letter-spacing:0.214px;line-height:21px;color:#000;top:603px;left:1677.00px;-webkit-text-stroke:0.3px #000;">0,000 €</span>
<span class="t" style="font-size:18.8px;letter-spacing:-0.682px;line-height:21px;color:#000;top:603px;left:1576.10px;-webkit-text-stroke:0.3px #000;">0,0</span>
<span class="t" style="font-size:18.8px;line-height:21px;color:#000;top:603px;left:1607.20px;transform:scaleX(0.7529);transform-origin:0 50%;-webkit-text-stroke:0.3px #000;">%</span>
<span class="t" style="font-size:18.8px;letter-spacing:0.046px;line-height:21px;color:#000;top:603px;left:1810.00px;-webkit-text-stroke:0.3px #000;">0,00 €</span>
<span class="t" style="font-size:18.8px;font-weight:700;line-height:21px;color:#000;top:628px;left:55.30px;transform:scaleX(0.9138);transform-origin:0 50%;">2.</span>
<span class="t" style="font-size:18.8px;font-weight:700;line-height:21px;color:#000;top:628px;left:80.30px;transform:scaleX(0.7000);transform-origin:0 50%;">1</span>
<span class="t" style="font-size:18.8px;font-weight:700;letter-spacing:-0.610px;line-height:21px;color:#000;top:628px;left:167.20px;">BEREICH</span>
<div style="left:353px;top:625px;width:460px;height:25px;overflow:hidden">
<span class="t" style="font-size:18.8px;font-weight:700;letter-spacing:0.417px;line-height:21px;color:#000;top:3px;left:3.40px;">Elektroarbeiten</span>
</div>
<span class="t" style="font-size:18.8px;font-weight:700;letter-spacing:0.046px;line-height:21px;color:#000;top:628px;left:1810.00px;">0,00 €</span>
</div>
<svg style="left:42px;top:405px" width="9" height="9" viewBox="0 0 9 9"><path d="M0 0 L9 0 L0 9 Z" fill="#008000"/></svg>
<svg style="left:42px;top:905px" width="9" height="9" viewBox="0 0 9 9"><path d="M0 0 L9 0 L0 9 Z" fill="#008000"/></svg>
<svg style="left:1747px;top:530px" width="9" height="9" viewBox="0 0 9 9"><path d="M0 0 L9 0 L0 9 Z" fill="#008000"/></svg>
<svg style="left:1747px;top:805px" width="9" height="9" viewBox="0 0 9 9"><path d="M0 0 L9 0 L0 9 Z" fill="#008000"/></svg>
<div style="left:2px;top:355px;width:39px;height:642px;background:#f0f0f0;"></div>
<div style="left:41px;top:355px;width:1px;height:642px;background:#a6a6a6;"></div>
<div style="left:0;top:355px;width:42px;height:642px;overflow:hidden">
<div style="left:2px;top:24px;width:39px;height:1px;background:#c6c6c6;"></div>
<span class="t" style="font-size:19.7px;letter-spacing:-0.300px;line-height:22px;color:#222;top:2px;left:16.00px;">1</span>
<div style="left:2px;top:49px;width:39px;height:1px;background:#c6c6c6;"></div>
<span class="t" style="font-size:19.7px;letter-spacing:-0.300px;line-height:22px;color:#222;top:27px;left:16.50px;">2</span>
<div style="left:2px;top:74px;width:39px;height:1px;background:#c6c6c6;"></div>
<span class="t" style="font-size:19.7px;letter-spacing:-0.300px;line-height:22px;color:#222;top:52px;left:16.00px;">3</span>
<div style="left:2px;top:99px;width:39px;height:1px;background:#c6c6c6;"></div>
<span class="t" style="font-size:19.7px;letter-spacing:-0.300px;line-height:22px;color:#222;top:77px;left:16.00px;">4</span>
<div style="left:2px;top:124px;width:39px;height:1px;background:#c6c6c6;"></div>
<span class="t" style="font-size:19.7px;letter-spacing:-0.300px;line-height:22px;color:#222;top:102px;left:16.00px;">5</span>
<div style="left:2px;top:149px;width:39px;height:1px;background:#c6c6c6;"></div>
<div style="left:2px;top:124px;width:39px;height:26px;background:#d2d2d2;"></div>
<div style="left:2px;top:124px;width:39px;height:1px;background:#b2b2b2;"></div>
<div style="left:2px;top:149px;width:39px;height:1px;background:#b2b2b2;"></div>
<div style="left:40px;top:124px;width:2px;height:26px;background:#107c41;"></div>
<span class="t" style="font-size:19.7px;letter-spacing:-0.300px;line-height:22px;color:#137a40;top:127px;left:15.50px;">6</span>
<div style="left:2px;top:174px;width:39px;height:1px;background:#c6c6c6;"></div>
<span class="t" style="font-size:19.7px;letter-spacing:-0.300px;line-height:22px;color:#222;top:152px;left:16.00px;">7</span>
<div style="left:2px;top:199px;width:39px;height:1px;background:#c6c6c6;"></div>
<span class="t" style="font-size:19.7px;letter-spacing:-0.300px;line-height:22px;color:#222;top:177px;left:16.00px;">8</span>
<div style="left:2px;top:224px;width:39px;height:1px;background:#c6c6c6;"></div>
<span class="t" style="font-size:19.7px;letter-spacing:-0.300px;line-height:22px;color:#222;top:202px;left:16.00px;">9</span>
<div style="left:2px;top:249px;width:39px;height:1px;background:#c6c6c6;"></div>
<span class="t" style="font-size:19.7px;letter-spacing:-0.300px;line-height:22px;color:#222;top:227px;left:10.18px;">10</span>
<div style="left:2px;top:274px;width:39px;height:1px;background:#c6c6c6;"></div>
<span class="t" style="font-size:19.7px;letter-spacing:-0.300px;line-height:22px;color:#222;top:252px;left:11.41px;">11</span>
<div style="left:2px;top:299px;width:39px;height:1px;background:#c6c6c6;"></div>
<span class="t" style="font-size:19.7px;letter-spacing:-0.300px;line-height:22px;color:#222;top:277px;left:10.68px;">12</span>
<div style="left:2px;top:324px;width:39px;height:1px;background:#c6c6c6;"></div>
<span class="t" style="font-size:19.7px;letter-spacing:-0.300px;line-height:22px;color:#222;top:302px;left:10.18px;">13</span>
<div style="left:2px;top:349px;width:39px;height:1px;background:#c6c6c6;"></div>
<span class="t" style="font-size:19.7px;letter-spacing:-0.300px;line-height:22px;color:#222;top:327px;left:10.18px;">14</span>
<div style="left:2px;top:374px;width:39px;height:1px;background:#c6c6c6;"></div>
<span class="t" style="font-size:19.7px;letter-spacing:-0.300px;line-height:22px;color:#222;top:352px;left:10.18px;">15</span>
<div style="left:2px;top:399px;width:39px;height:1px;background:#c6c6c6;"></div>
<span class="t" style="font-size:19.7px;letter-spacing:-0.300px;line-height:22px;color:#222;top:377px;left:10.18px;">16</span>
<div style="left:2px;top:424px;width:39px;height:1px;background:#c6c6c6;"></div>
<span class="t" style="font-size:19.7px;letter-spacing:-0.300px;line-height:22px;color:#222;top:402px;left:10.68px;">17</span>
<div style="left:2px;top:449px;width:39px;height:1px;background:#c6c6c6;"></div>
<span class="t" style="font-size:19.7px;letter-spacing:-0.300px;line-height:22px;color:#222;top:427px;left:10.18px;">18</span>
<div style="left:2px;top:474px;width:39px;height:1px;background:#c6c6c6;"></div>
<span class="t" style="font-size:19.7px;letter-spacing:-0.300px;line-height:22px;color:#222;top:452px;left:10.18px;">19</span>
<div style="left:2px;top:499px;width:39px;height:1px;background:#c6c6c6;"></div>
<span class="t" style="font-size:19.7px;letter-spacing:-0.300px;line-height:22px;color:#222;top:477px;left:10.68px;">20</span>
<div style="left:2px;top:524px;width:39px;height:1px;background:#c6c6c6;"></div>
<span class="t" style="font-size:19.7px;letter-spacing:-0.300px;line-height:22px;color:#222;top:502px;left:11.18px;">21</span>
<div style="left:2px;top:549px;width:39px;height:1px;background:#c6c6c6;"></div>
<span class="t" style="font-size:19.7px;letter-spacing:-0.300px;line-height:22px;color:#222;top:527px;left:11.18px;">22</span>
<div style="left:2px;top:574px;width:39px;height:1px;background:#c6c6c6;"></div>
<span class="t" style="font-size:19.7px;letter-spacing:-0.300px;line-height:22px;color:#222;top:552px;left:10.68px;">23</span>
<div style="left:2px;top:599px;width:39px;height:1px;background:#c6c6c6;"></div>
<span class="t" style="font-size:19.7px;letter-spacing:-0.300px;line-height:22px;color:#222;top:577px;left:10.68px;">24</span>
<div style="left:2px;top:624px;width:39px;height:1px;background:#c6c6c6;"></div>
<span class="t" style="font-size:19.7px;letter-spacing:-0.300px;line-height:22px;color:#222;top:602px;left:10.68px;">25</span>
<div style="left:2px;top:649px;width:39px;height:1px;background:#c6c6c6;"></div>
<span class="t" style="font-size:19.7px;letter-spacing:-0.300px;line-height:22px;color:#222;top:627px;left:10.68px;">26</span>
</div>
<div style="left:1888px;top:326px;width:30px;height:677px;background:#f0f0f0;"></div>
<div style="left:1890px;top:327px;width:26px;height:673px;background:#f5f5f5;border-radius:13px"></div>
<svg style="left:1895.5px;top:333.5px" width="15" height="11" viewBox="0 0 15 11"><path d="M7.5 0.8 L14 8 Q14.6 10 12.6 10 L2.4 10 Q0.4 10 1 8 Z" fill="#737373"/></svg>
<svg style="left:1895.5px;top:982px" width="15" height="11" viewBox="0 0 15 11"><path d="M7.5 10.2 L14 3 Q14.6 1 12.6 1 L2.4 1 Q0.4 1 1 3 Z" fill="#737373"/></svg>
<div style="left:1897px;top:352px;width:12px;height:26px;background:#767676;border-radius:6px"></div>
<div style="left:168px;top:997px;width:49px;height:42px;background:#fff;border-radius:0 0 7px 7px;box-shadow:0 0 2px rgba(0,0,0,0.12)"></div>
<span class="t" style="font-size:20.3px;letter-spacing:-0.374px;line-height:22px;color:#1a1a1a;top:1007px;left:180.30px;">LV</span>
<div style="left:180px;top:1032px;width:24px;height:3px;background:#107c41;"></div>
<div style="left:222px;top:1007px;width:1px;height:27px;background:#d0d0d0;"></div>
<span class="t" style="font-size:19.5px;letter-spacing:0.903px;line-height:22px;color:#3a3a3a;top:1012px;left:243.00px;">Summenblatt</span>
<div style="left:388px;top:1007px;width:1px;height:27px;background:#d0d0d0;"></div>
<svg style="left:36px;top:1011px" width="12" height="18" viewBox="0 0 12 18"><path d="M10 1.5 L2 9 L10 16.5" fill="none" stroke="#8c8c8c" stroke-width="1.6"/></svg>
<svg style="left:85px;top:1011px" width="12" height="18" viewBox="0 0 12 18"><path d="M2 1.5 L10 9 L2 16.5" fill="none" stroke="#8c8c8c" stroke-width="1.6"/></svg>
<svg style="left:451px;top:1011px" width="18" height="18" viewBox="0 0 18 18"><path d="M9 0.5 V17.5 M0.5 9 H17.5" stroke="#3a3a3a" stroke-width="1.4"/></svg>
<div style="left:1155.3px;top:1014px;width:3.4px;height:3.2px;background:#3a3a3a;border-radius:0.8px;"></div>
<div style="left:1155.3px;top:1020px;width:3.4px;height:3.2px;background:#3a3a3a;border-radius:0.8px;"></div>
<div style="left:1155.3px;top:1026px;width:3.4px;height:3.2px;background:#3a3a3a;border-radius:0.8px;"></div>
<div style="left:1181px;top:1007px;width:709px;height:27px;background:#f5f5f5;border-radius:13.5px"></div>
<svg style="left:1188px;top:1013px" width="11" height="15" viewBox="0 0 11 15"><path d="M0.8 7.5 L8 1 Q10 0.4 10 2.4 L10 12.6 Q10 14.6 8 14 Z" fill="#737373"/></svg>
<svg style="left:1872px;top:1013px" width="11" height="15" viewBox="0 0 11 15"><path d="M10.2 7.5 L3 1 Q1 0.4 1 2.4 L1 12.6 Q1 14.6 3 14 Z" fill="#737373"/></svg>
<div style="left:1207px;top:1014px;width:619px;height:12px;background:#737373;border-radius:6px"></div>
<div style="left:2px;top:1045px;width:1916px;height:1px;background:#d4d4d4;"></div>
<div style="left:2px;top:1046px;width:1916px;height:32px;background:#f3f3f3;"></div>
<span class="t" style="font-size:15px;letter-spacing:-0.043px;line-height:17px;color:#3b3b3b;top:1054px;left:19.00px;">Bereit</span>
<span class="t" style="font-size:15px;letter-spacing:0.207px;line-height:17px;color:#3b3b3b;top:1054px;left:184.00px;">Barrierefreiheit: Keine Probleme</span>
<svg style="left:110px;top:1052px" width="23" height="21" viewBox="0 0 23 21">
<path d="M1 18.5 V1.5 H20.5 V7" fill="none" stroke="#3b3b3b" stroke-width="1.5"/><path d="M1 4.5 H20.5" stroke="#3b3b3b" stroke-width="1.3"/>
<path d="M3.5 8.5 H8 M3.5 12 H7 M3.5 15.5 H7 M1 18.5 H8" stroke="#3b3b3b" stroke-width="1.4"/>
<circle cx="15" cy="13.5" r="6" fill="none" stroke="#3b3b3b" stroke-width="1.5"/><circle cx="15" cy="13.5" r="2.8" fill="#3b3b3b"/></svg>
<svg style="left:157px;top:1051px" width="24" height="22" viewBox="0 0 24 22">
<circle cx="10" cy="3.6" r="2.4" fill="none" stroke="#3b3b3b" stroke-width="1.4"/>
<path d="M1.5 6.5 Q1 4.5 3 5 L7.5 7.5 H12.5 L17 5 Q19 4.5 18.2 6.6 L13 10 V13 M7 10 L1.5 6.5 M7 10 V14 L4.5 19 Q4.5 20.8 6.3 20 L9 15" fill="none" stroke="#3b3b3b" stroke-width="1.4" stroke-linejoin="round" stroke-linecap="round"/>
<path d="M11 16.5 L14.5 20 L22.5 12" fill="none" stroke="#3b3b3b" stroke-width="1.6"/></svg>
<div style="left:1452px;top:1046px;width:60px;height:32px;background:#dcdcdc;"></div>
<svg style="left:1470px;top:1051px" width="23" height="21" viewBox="0 0 23 21"><path d="M1 1 H22 V20 H1 Z M1 7.3 H22 M1 13.6 H22 M8 1 V20 M15 1 V20" fill="none" stroke="#3b3b3b" stroke-width="1.5"/></svg>
<svg style="left:1530px;top:1051px" width="23" height="21" viewBox="0 0 23 21"><path d="M1 1 H22 V20 H1 Z" fill="none" stroke="#3b3b3b" stroke-width="1.5"/><path d="M6 5.5 H17 V15.5 H6 Z" fill="none" stroke="#3b3b3b" stroke-width="1.3"/><path d="M8.5 8.5 H14.5 M8.5 10.8 H14.5 M8.5 13 H14.5" stroke="#3b3b3b" stroke-width="1.1"/></svg>
<svg style="left:1590px;top:1051px" width="23" height="21" viewBox="0 0 23 21"><path d="M1 1 H22 V20 H1 Z M6.5 1 V10.5 H15.5 V1 M11 1 V10.5" fill="none" stroke="#3b3b3b" stroke-width="1.5"/></svg>
<div style="left:1639px;top:1061.4px;width:12px;height:1.3px;background:#5a5a5a;"></div>
<div style="left:1660px;top:1061.3px;width:148px;height:1.4px;background:#6a6a6a;"></div>
<div style="left:1730px;top:1053px;width:8px;height:17px;background:#6b6b6b;"></div>
<svg style="left:1816px;top:1056px" width="12" height="12" viewBox="0 0 12 12"><path d="M6 0 V12 M0 6 H12" stroke="#4a4a4a" stroke-width="1.3"/></svg>
<span class="t" style="font-size:15px;letter-spacing:0.276px;line-height:17px;color:#3b3b3b;top:1054px;left:1846.40px;">100 %</span>
</body></html>
